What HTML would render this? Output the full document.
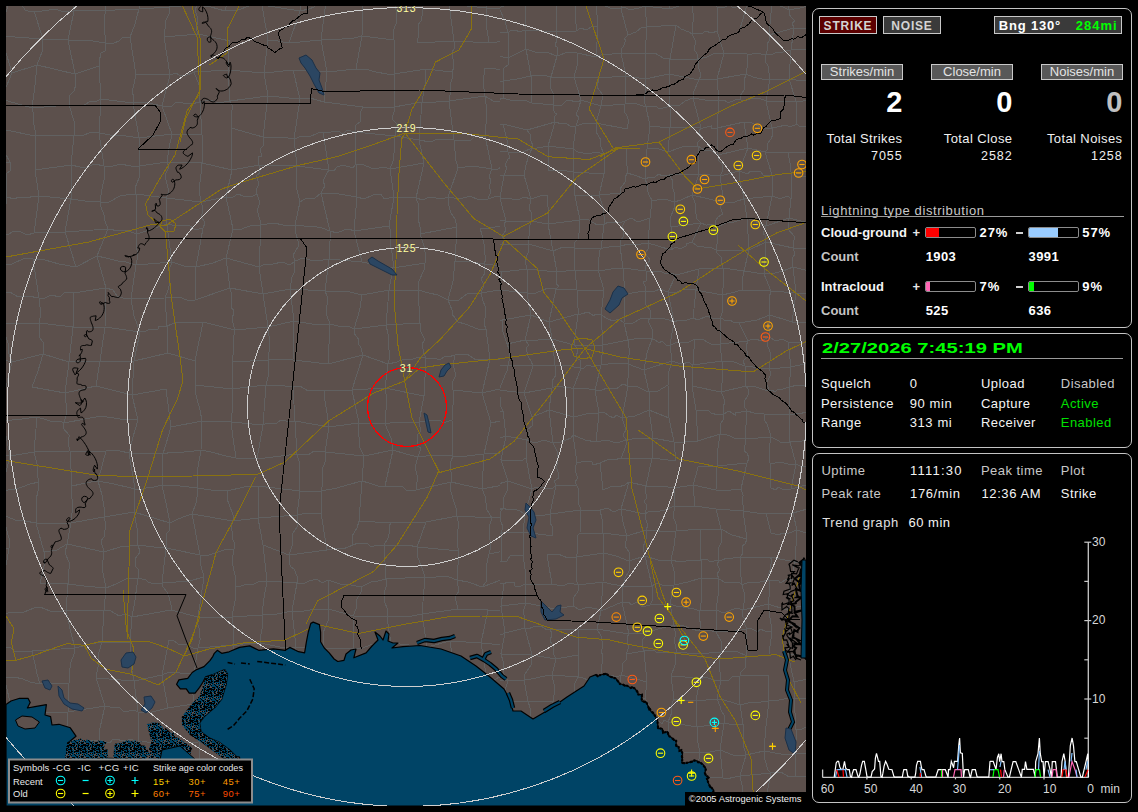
<!DOCTYPE html><html><head><meta charset="utf-8"><style>
html,body{margin:0;padding:0;background:#000;width:1138px;height:812px;overflow:hidden;}
body{position:relative;font-family:"Liberation Sans",sans-serif;}
.t{position:absolute;white-space:nowrap;line-height:1;}
.pn{position:absolute;border:1px solid #c4c4c4;border-radius:7px;box-sizing:border-box;}
.btn{position:absolute;box-sizing:border-box;border:1px solid #c8c8c8;}
.bar{position:absolute;box-sizing:border-box;border:1px solid #8c8c8c;border-radius:2px;overflow:hidden;}
.bar i{position:absolute;left:0;top:0;bottom:0;display:block;}

</style></head><body>
<svg width="1138" height="812" style="position:absolute;left:0;top:0">
<defs><clipPath id="mc"><rect x="6" y="6" width="800" height="800"/></clipPath></defs>
<g clip-path="url(#mc)">
<rect x="6" y="6" width="800" height="800" fill="#5c504c"/>
<clipPath id="cw"><rect x="6" y="6" width="494" height="800"/></clipPath><clipPath id="ce"><rect x="500" y="6" width="306" height="800"/></clipPath>
<path clip-path="url(#cw)" d="M-27 -25L1 -24M-27 -25L-24 -21L-23 -12L-25 -8L-20 1L-21 6M-21 6L-22 15L-22 30L-26 39M-26 39L1 36M-26 39L-25 48L-30 56L-27 62L-30 70M-30 70L-24 106M-24 106L1 99M-24 106L-31 132M-31 132L-21 131L-17 130L-4 131L1 129M-31 132L-31 170M-31 170L-20 168L-15 167L-9 166L0 162L10 162M-31 170L-24 193M-24 193L-15 195L-6 197L7 197M-24 193L-21 202L-25 212L-24 216L-20 229L-20 236M-20 236L2 233M-24 263L-15 265L-9 263L2 264M-24 263L-24 271L-28 276L-30 282L-30 288M-30 288L1 293M-30 288L-27 293L-30 299L-27 307L-27 313L-26 321M-26 321L3 323M-26 321L-26 330L-29 344L-30 355M-30 355L-18 357L-8 358L1 359L12 362M-30 355L-32 361L-31 367L-29 373L-31 384L-32 390M-32 390L4 395M-32 390L-32 407L-27 426M-27 426L3 421M-27 426L-26 456M-26 456L-15 454L0 455L10 456M-26 488L1 492M-26 488L-28 497L-26 504L-27 515M-27 515L-17 515L-5 515L3 515M-27 515L-20 556M-20 556L9 548M-20 556L-22 584M-22 584L4 577M-22 584L-28 611M-28 611L-17 611L-9 611L1 615M-28 611L-29 641M-29 641L3 647M-29 641L-23 677M-23 677L-15 676L-6 679L4 677M-23 677L-25 692L-22 709M-22 709L12 710M-22 709L-21 746M-21 746L-8 747L7 746M-21 746L-32 771M-32 771L2 770M-32 771L-21 806M-21 806L-14 806L-6 810L5 809L11 810M-21 806L-20 837M-20 837L3 834M1 -24L41 -21M1 -24L9 3M9 3L15 6L22 5L25 10L28 11L34 11M9 3L6 12L3 19L3 26L1 36M1 36L43 39M1 36L12 73M12 73L37 65M12 73L1 99M1 99L32 108M1 129L35 136M1 129L4 135L5 145L5 153L10 162M10 162L10 171L6 174L7 183L6 192L7 197M7 197L14 199L19 197L28 198L33 196L39 196M7 197L2 233M2 233L8 235L13 231L21 232L27 235L34 233M2 233L2 264M2 264L12 264L25 258L33 259M2 264L2 279L1 293M1 293L10 292L18 297L28 296L39 298M1 293L3 323M3 323L39 323M3 323L4 332L8 343L8 351L12 362M12 362L43 354M12 362L4 395M3 421L22 419L37 417M3 421L10 456M10 456L34 452M10 456L1 492M1 492L8 490L16 489L22 487L30 484L39 482M1 492L2 501L4 505L3 515M3 515L15 520L25 521L36 523M3 515L5 523L7 531L10 542L9 548M9 548L4 577M4 577L2 598L1 615M1 615L11 612L24 612L34 608M1 615L3 647M3 647L10 647L14 651L20 651L27 652L32 651M3 647L4 677M4 677L14 677L23 679L30 682L40 684M4 677L12 710M7 746L38 745M2 770L36 780M2 770L11 810M11 810L33 807M11 810L10 813L8 821L5 823L4 828L3 834M3 834L20 836L41 843M41 -21L73 -24M34 11L42 11L56 9L63 12L74 11M34 11L43 39M43 39L68 40M43 39L42 52L37 65M37 65L75 74M37 65L35 85L32 108M32 108L69 105M32 108L34 115L33 120L35 130L35 136M35 136L74 135M35 136L35 170M35 170L71 165M35 170L39 196M39 196L71 199M39 196L34 233M34 233L65 232M33 259L45 260L59 264L76 267M33 259L39 298M39 298L45 298L51 295L60 297L65 292L73 293M39 298L40 307L41 313L39 323M39 323L73 327M39 323L40 330L39 337L43 342L43 348L43 354M43 354L69 362M43 354L38 371L32 387M32 387L65 393M37 417L47 420L50 421L60 421L64 423M37 417L34 452M34 452L70 451M34 452L37 464L37 474L39 482M39 482L38 491L36 500L37 512L36 523M36 523L71 523M36 523L44 552M44 552L57 550L67 544M44 552L44 566L40 583M40 583L68 584M34 608L40 607L50 611L59 612L66 610M32 651L75 648M32 651L35 664L37 674L40 684M40 684L48 682L53 684L60 683L69 683M32 712L68 712M32 712L32 722L36 729L36 736L38 745M38 745L66 741M38 745L36 780M36 780L74 779M36 780L34 794L33 807M33 807L41 808L56 803L65 804L75 805M33 807L41 843M41 843L71 836M73 -24L98 -26M73 -24L72 -14L74 -8L73 1L74 11M74 11L106 10M74 11L68 40M68 40L87 40L105 43M68 40L75 74M75 74L99 66M75 74L76 84L74 91L69 96L69 105M69 105L76 105L84 105L91 101L97 101L101 99M69 105L74 121L74 135M74 135L82 136L91 132L99 133M74 135L71 165M71 165L80 167L87 167L95 164L104 166M71 165L71 199M71 199L85 201L100 202M71 199L65 232M65 232L108 229M65 232L76 267M76 267L97 256M73 293L106 288M73 293L73 327M73 327L105 327M73 327L69 362M69 362L100 361M69 362L65 393M65 393L96 386M65 393L65 401L66 403L66 410L66 415L64 423M64 423L101 416M64 423L63 428L69 435L69 437L68 443L70 451M70 451L106 451M70 451L72 486M72 486L81 484L91 482L98 481M72 486L71 493L73 504L72 513L71 523M71 523L104 517M71 523L67 544M67 544L104 552M67 544L65 553L70 564L68 575L68 584M68 584L84 586L106 588M68 584L66 610M66 610L104 610M66 610L70 629L75 648M75 648L90 644L102 642M75 648L74 654L71 662L70 668L69 674L69 683M69 683L68 712M68 712L105 706M68 712L66 741M66 741L99 740M66 741L74 779M74 779L84 775L95 775L104 774M74 779L72 790L75 805M75 805L103 809M75 805L73 822L71 836M71 836L79 837L84 837L92 842L101 842M98 -26L109 -29L123 -27L139 -31M98 -26L106 10M106 10L111 11L119 9L127 9L132 9L139 9M106 10L104 18L104 26L105 35L105 43M105 43L109 43L114 43L119 41L123 37L130 37M105 43L105 51L101 53L99 62L99 66M99 66L101 99M101 99L133 103M101 99L99 133M99 133L110 135L126 136L139 138M99 133L104 166M104 166L110 167L120 164L131 166L139 166M104 166L104 180L102 189L100 202M100 202L109 202L120 196L126 195L136 194M100 202L101 207L104 215L105 221L108 229M108 229L119 231L125 230L137 234M108 229L97 256M97 256L106 258L118 261L126 262L136 265M97 256L106 288M106 288L113 290L117 296L123 298L131 299M106 288L105 327M105 327L140 332M105 327L100 361M100 361L134 361M100 361L96 386M96 386L132 395M101 416L120 419L138 420M106 451L116 450L120 451L129 453M106 451L98 481M98 481L114 484L135 489M98 481L102 495L104 507L104 517M104 517L134 512M104 517L106 524L104 537L101 541L104 552M104 552L120 547L138 545M104 552L102 568L106 588M106 588L116 584L126 579L138 578M106 588L104 610M104 610L111 611L119 616L125 614L132 617M104 610L102 642M102 642L110 643L119 642L130 642M102 642L99 652L98 667L96 678M96 678L134 681M96 678L105 706M105 706L110 707L120 708L124 712L134 710L138 712M105 706L102 719L100 728L99 740M99 740L110 743L113 739L126 741L130 739L139 742M99 740L104 774M104 774L139 769M104 774L103 809M103 809L131 806M101 842L113 842L123 841L131 841M139 -31L168 -26M139 -31L141 -10L139 9M139 9L170 7M139 9L137 16L135 24L132 32L130 37M130 37L136 75M136 75L145 74L159 74L170 75M136 75L134 83L134 84L132 92L134 97L133 103M133 103L138 102L149 103L153 104L162 106M133 103L139 138M139 138L172 134M139 138L139 166M139 166L167 162M139 166L139 172L139 178L135 188L136 194M136 194L166 198M136 194L137 234M137 234L167 224M137 234L136 244L138 256L136 265M136 265L172 262M136 265L131 299M131 299L165 298M131 299L134 316L140 332M140 332L146 331L150 329L158 329L159 326L167 326M140 332L134 361M134 361L168 353M134 361L132 395M132 395L166 389M132 395L138 420M138 420L133 437L129 453M129 453L163 454M129 453L135 489M135 489L143 489L149 487L154 487L162 485M135 489L134 512M134 512L170 523M134 512L137 528L138 545M138 545L154 547L166 548M138 545L140 552L135 559L136 567L139 570L138 578M138 578L146 580L148 582L154 584L162 583M138 578L135 600L132 617M132 617L171 610M132 617L130 642M130 642L130 655L131 666L134 681M134 681L162 675M134 681L138 712M138 712L152 712L168 708M138 712L139 742M139 742L146 741L148 743L154 741L161 743L164 743M139 742L138 753L139 760L139 769M139 769L161 777M139 769L131 806M131 806L135 808L144 808L147 806L155 806L161 806M131 806L131 815L129 821L130 835L131 841M131 841L163 834M168 -26L174 -24L181 -28L188 -24L198 -27M168 -26L170 7M170 7L181 6L197 5M170 7L169 14L166 20L165 26L165 29L164 37M164 37L198 34M164 37L170 75M170 75L176 73L179 75L187 75L192 73L194 72M170 75L162 106M162 106L171 107L176 102L183 103L191 104L200 102M162 106L172 134M172 134L202 135M172 134L169 148L167 162M167 162L202 163M167 162L169 167L165 175L167 184L169 191L166 198M166 198L201 202M166 198L167 224M167 224L172 225L183 225L189 225L195 230L203 228M167 224L169 241L172 262M172 262L184 266L196 267M172 262L169 270L169 277L170 282L168 290L165 298M165 298L174 297L182 298L189 301L195 300M165 298L167 326M167 326L177 322L190 323L203 322M167 326L168 353M168 353L195 361M166 389L171 427M171 427L202 421M171 427L163 454M163 454L172 452L184 452L194 451L201 450M163 454L162 485M162 485L180 486L197 488M162 485L166 503L170 523M170 523L176 520L183 517L186 516L192 514M170 523L169 531L166 534L167 540L166 548M166 548L200 555M166 548L162 583M162 583L176 582L189 581L204 577M162 583L163 587L167 592L169 597L171 605L171 610M171 610L198 617M169 640L173 640L178 644L185 644L193 648L198 648M169 640L162 675M162 675L169 672L180 673L184 673L194 673M162 675L168 708M168 708L193 704M164 743L199 742M164 743L165 750L163 756L162 763L162 770L161 777M161 777L173 773L186 773L199 770M161 806L172 807L179 805L187 803L194 802M161 806L160 814L165 825L163 834M163 834L202 844M198 -27L217 -31L235 -31M198 -27L197 -8L197 5M197 5L211 7L225 11M197 5L195 10L197 16L198 23L196 27L198 34M198 34L230 41M194 72L228 70M194 72L199 85L200 102M200 102L211 100L218 103L230 101M200 102L202 135M202 135L202 163M202 163L232 170M202 163L201 174L199 190L201 202M201 202L226 197M201 202L202 205L202 214L201 216L205 223L203 228M203 228L196 267M196 267L213 263L226 258M196 267L195 300M195 300L230 288M203 322L235 330M203 322L195 361M195 361L195 385M195 385L232 389M195 385L196 395L200 410L202 421M202 421L231 422M202 421L201 450M201 450L211 452L226 456L236 458M201 450L198 467L197 488M197 488L211 490L227 491M197 488L197 497L196 503L192 514M192 514L233 521M192 514L200 555M200 555L209 555L224 550L234 549M200 555L201 566L204 577M204 577L198 617M198 617L232 617M198 617L197 622L199 628L200 638L200 640L198 648M198 648L233 645M198 648L194 673M194 673L233 673M194 673L196 678L193 686L192 691L194 699L193 704M193 704L204 707L211 709L218 708L228 710M193 704L199 742M199 742L224 740M199 742L199 770M199 770L209 773L223 771L232 775M199 770L197 779L195 792L194 802M194 802L227 811M194 802L196 813L196 823L202 835L202 844M202 844L232 836M235 -31L241 -30L249 -27L257 -26L264 -25M235 -31L230 -16L229 -3L225 11M225 11L238 10L252 5L262 5M230 41L229 50L228 53L229 60L228 70M228 70L264 73M228 70L230 101M230 101L268 96M230 101L233 107L231 114L231 122L231 128M231 128L263 137M231 128L232 170M232 170L259 165M232 170L226 197M226 197L233 197L238 194L243 196L251 197L257 194M226 197L233 229M233 229L239 230L247 227L253 225L261 225M233 229L226 258M226 258L259 267M226 258L230 288M230 288L263 294M230 288L232 296L231 307L234 311L232 320L235 330M235 330L268 327M235 330L233 340L234 349L232 362M232 362L268 360M232 362L232 378L232 389M232 389L266 385M232 389L233 404L231 422M231 422L263 425M231 422L233 438L236 458M236 458L257 459M227 491L244 487L258 486M227 491L227 499L229 504L233 515L233 521M233 521L258 518M233 521L231 527L232 531L233 540L234 542L234 549M234 549L232 562L235 575L235 587M235 587L241 586L247 584L254 584L260 581L267 581M235 587L236 596L234 606L232 617M232 617L262 615M232 617L233 625L234 633L233 639L233 645M233 645L237 646L243 644L248 643L255 643L260 643M233 645L233 673M233 673L240 672L248 674L257 678L264 679M233 673L228 710M228 710L259 713M228 710L224 740M224 740L260 736M224 740L226 759L232 775M232 775L227 811M227 811L232 836M232 836L241 839L247 839L255 842L261 843M264 -25L272 -25L279 -27L285 -28L290 -29L297 -31M264 -25L262 -20L262 -10L263 -2L262 5M262 5L300 11M262 5L268 40M268 40L273 40L283 42L289 43M268 40L264 73M264 73L293 70M264 73L268 96M268 96L300 99M268 96L263 137M263 137L281 137L294 139M263 137L264 145L260 149L262 156L258 157L259 165M259 165L297 166M259 165L260 173L256 176L259 183L256 191L257 194M257 194L260 203L257 210L260 220L261 225M261 225L274 223L283 225L295 225M261 225L259 267M259 267L265 264L273 264L282 262L290 265L295 261M259 267L263 294M263 294L290 289M263 294L268 327M268 327L294 321M268 327L270 344L268 360M268 360L278 359L287 359L293 360M268 360L269 373L266 385M266 385L277 385L293 387M266 385L263 425M263 425L267 423L277 423L281 420L286 421L295 421M263 425L257 459M257 459L297 454M258 486L300 491M258 486L258 518M258 518L297 515M258 518L263 545M263 545L289 555M263 545L267 581M267 581L297 583M267 581L264 598L262 615M262 615L277 614L292 611M262 615L263 624L261 634L260 643M260 643L280 647L296 647M260 643L263 659L264 679M264 679L261 688L262 697L260 706L259 713M259 713L262 718L259 727L260 731L260 736M260 736L259 769M259 769L269 769L275 771L284 773L290 776L299 779M259 769L258 809M258 809L269 805L280 803L288 801M258 809L258 815L257 824L261 836L261 843M297 -31L327 -31M297 -31L298 -21L297 -8L300 -1L300 11M300 11L309 9L314 7L318 2L326 1M300 11L289 43M289 43L321 40M293 70L327 72M293 70L300 99M300 99L310 98L324 102M300 99L294 139M294 139L302 136L305 136L309 137L318 133L323 132M294 139L297 166M297 166L329 170M297 166L296 186L300 202M300 202L305 199L315 198L321 193M300 202L295 225M295 225L304 226L312 226L322 228L330 231M295 225L296 234L298 241L298 247L293 255L295 261M295 261L303 258L314 261L323 260L329 259M295 261L294 273L292 277L290 289M290 289L325 291M290 289L294 321M294 321L312 324L330 324M294 321L293 360M293 360L328 364M293 387L300 386L308 391L315 390L324 391M293 387L295 421M295 421L329 427M295 421L297 454M297 454L308 455L314 451L325 452M297 454L300 465L299 479L300 491M300 491L321 491M300 491L297 515M297 515L308 513L321 513M297 515L297 527L293 533L292 546L289 555M289 555L327 550M289 555L289 563L291 567L294 569L297 576L297 583M297 583L305 583L309 581L317 579L322 583L328 580M297 583L292 611M292 611L304 611L316 609L329 609M292 611L296 647M296 647L323 648M296 647L295 680M295 680L298 677L303 679L311 680L315 675L321 676M295 680L297 706M297 706L291 748M291 748L298 744L307 743L315 741L323 738M291 748L299 779M299 779L324 777M299 779L294 784L294 795L288 801M288 801L308 803L324 801M288 801L291 837M291 837L329 839M327 -31L334 -26L344 -24L353 -24L363 -21M327 -31L326 1M326 1L321 40M321 40L329 39L342 39L354 38L362 36M321 40L327 72M327 72L356 69M327 72L324 102M324 102L363 107M323 132L331 132L338 131L343 134L347 130L355 132M323 132L329 170M329 170L334 171L337 167L343 165L353 168L356 164M329 170L326 175L323 181L325 186L322 191L321 193M321 193L332 193L345 195L357 197M321 193L330 231M330 231L337 233L344 230L349 229L354 231M330 231L330 241L329 252L329 259M329 259L362 262M329 259L325 291M325 291L346 291L362 295M325 291L327 296L327 305L326 309L327 316L330 324M330 324L338 326L344 327L348 326L354 329M330 324L328 364M328 364L363 355M324 391L352 390M324 391L325 401L327 413L329 427M329 427L359 423M329 427L325 452M325 452L364 456M325 452L325 462L322 470L323 483L321 491M321 491L337 488L347 485L362 481M321 491L321 513M321 513L327 550M327 550L337 548L343 549L353 545M328 580L340 584L351 585L361 587M328 580L329 609M329 609L353 616M329 609L328 621L323 633L323 648M323 648L354 649M323 648L323 662L321 676M321 676L360 675M321 676L329 712M329 712L333 712L344 713L350 714L355 713M329 712L324 722L324 730L323 738M323 738L330 737L337 741L344 741L349 746L358 745M323 738L324 777M324 777L357 772M324 777L325 783L323 789L327 792L327 797L324 801M324 801L364 808M329 839L340 838L349 839L358 838M363 -21L368 -21L379 -22L388 -23L393 -24M363 -21L362 -17L361 -6L361 -1L363 5M363 5L395 5M363 5L362 36M362 36L394 40M362 36L356 69M356 69L365 69L376 72L387 74L394 74M363 107L394 107M363 107L360 113L360 122L356 125L355 132M355 132L395 136M355 132L356 164M356 164L364 165L371 168L375 169L384 167L390 169M356 164L356 173L357 178L356 186L356 190L357 197M357 197L364 199L373 195L381 194L384 199L394 197M357 197L354 231M354 231L389 226M354 231L362 262M362 262L393 268M362 295L389 290M362 295L360 308L358 316L354 329M354 329L386 325M354 329L354 333L359 340L358 343L361 348L363 355M363 355L388 364M363 355L352 390M352 390L385 388M352 390L359 423M359 423L385 424M359 423L358 432L359 437L360 448L364 456M364 456L393 450M364 456L362 481M362 481L369 483L378 486L385 486M362 481L359 521M359 521L391 523M359 521L357 528L352 536L353 545M353 545L358 543L368 544L371 547L377 545L384 545M361 587L371 582L378 581L386 579M361 587L361 592L356 601L356 609L353 616M353 616L387 617M353 616L354 649M354 649L363 648L370 645L377 643L382 642L391 643M360 675L368 676L373 674L380 675L386 675M360 675L355 713M355 713L361 715L368 713L372 711L378 713L386 713M355 713L358 745M358 745L364 746L370 746L378 745L383 744L388 743M358 745L357 772M357 772L370 771L381 772L394 774M357 772L364 808M364 808L387 811M364 808L358 838M358 838L395 836M393 -24L409 -20L423 -21M393 -24L394 -18L392 -14L393 -8L396 -1L395 5M395 5L401 6L404 7L409 4L418 4L422 3M395 5L397 15L396 24L393 31L394 40M394 40L394 74M394 74L426 69M394 74L394 107M394 107L422 102M394 107L394 112L392 119L397 124L396 128L395 136M395 136L419 140M395 136L394 142L394 153L393 161L390 169M390 169L424 163M390 169L394 197M394 197L416 198M394 197L389 226M389 226L391 232L390 242L392 253L393 261L393 268M393 268L425 263M393 268L389 290M389 290L418 290M389 290L386 325M386 325L420 323M386 325L388 334L388 344L390 356L388 364M388 364L397 362L404 359L410 360L419 357L426 358M388 364L385 388M385 388L424 396M385 388L387 399L386 410L385 424M385 424L396 422L410 422L419 422M385 424L391 438L393 450M393 450L406 454L418 457M393 450L385 486M385 486L390 487L402 486L406 490L416 490M391 523L426 522M391 523L389 526L389 534L388 538L384 545M384 545L396 546L408 545L417 547M384 545L386 579M386 579L425 577M386 579L386 587L384 593L385 603L387 608L387 617M387 617L395 616L404 616L412 616L422 614M387 617L389 631L391 643M391 643L427 647M391 643L386 675M386 675L426 676M386 675L386 713M386 713L425 709M386 713L388 743M388 743L403 743L415 738L427 737M388 743L388 750L390 756L390 763L394 766L394 774M394 774L387 811M387 811L423 806M387 811L389 817L389 822L394 830L395 836M423 -21L432 -25L444 -27L452 -28M423 -21L422 3M422 3L426 4L436 2L444 3L449 4M422 3L423 12L421 21L418 25L419 33L417 43M417 43L454 41M426 69L452 72M426 69L425 85L422 102M422 102L430 103L442 101L449 101M422 102L419 140M419 140L430 142L438 139L444 139L454 140M419 140L424 163M424 163L416 198M416 198L423 200L429 197L436 198L442 199L448 197M416 198L419 206L418 218L420 227L420 234M420 234L457 227M420 234L424 246L425 252L425 263M425 263L424 270L419 281L418 290M418 290L429 293L438 295L448 300M418 290L419 306L420 323M420 323L420 330L425 340L422 344L424 354L426 358M426 358L434 358L440 360L445 356L448 357L455 355M426 358L424 396M424 396L419 422M419 422L425 421L430 420L440 420L443 423L452 420M419 422L421 431L418 434L417 446L421 448L418 457M418 457L435 455L453 456M418 457L415 467L417 475L417 482L416 490M416 490L451 482M426 522L457 516M426 522L417 547M417 547L459 551M417 547L418 558L421 565L425 577M425 577L430 578L442 576L449 577L457 580M425 577L422 614M422 614L458 609M422 614L427 647M427 647L450 641M427 647L428 652L428 656L428 664L425 669L426 676M426 676L456 680M426 676L425 709M425 709L450 709M425 709L426 720L425 728L427 737M427 737L458 743M427 737L428 750L428 758L426 771M426 771L432 769L436 769L441 771L449 771M423 806L431 805L441 803L450 801M423 806L418 842M418 842L422 840L432 837L441 838L446 836L453 833M452 -28L471 -26L491 -27M452 -28L449 4M449 4L486 8M449 4L454 41M454 41L473 42L489 42M454 41L454 49L452 52L453 59L454 67L452 72M452 72L452 79L450 86L450 88L450 95L449 101M449 101L485 96M449 101L454 140M454 140L463 140L471 140L475 136L485 136M454 140L455 151L455 157L458 168M458 168L473 166L492 169M458 168L448 197M448 197L460 199L470 196L479 200L488 199M448 197L449 206L451 213L455 219L457 227M457 227L455 261M455 261L472 262L484 264M455 261L453 281L448 300M448 300L459 300L468 293L481 293M448 300L452 310L452 314L458 322M458 322L465 324L478 329L486 329M455 355L467 354L476 360L490 359M455 355L453 365L456 375L452 383L453 390M453 390L482 393M453 390L453 405L452 420M452 420L453 456M453 456L467 456L484 454M453 456L451 461L450 465L451 472L452 479L451 482M451 482L482 489M451 482L450 488L453 499L456 508L457 516M457 516L492 518M457 516L458 521L458 529L457 536L457 544L459 551M459 551L457 580M457 580L468 582L482 587M457 580L459 591L455 597L458 609M458 609L488 610M450 641L481 643M450 641L456 680M456 680L487 680M456 680L450 709M450 709L484 715M450 709L453 717L456 728L457 733L458 743M458 743L449 771M449 771L458 771L469 779L481 780M449 771L450 776L452 785L451 794L450 801M450 801L465 808L482 811M450 801L453 833M453 833L487 839M491 -27L519 -29M491 -27L488 -18L490 -11L490 -7L489 1L486 8M486 8L497 8L507 9L515 9L523 12M486 8L486 20L487 30L489 42M489 42L497 42L503 40L508 42L517 42L522 39M485 68L493 68L503 71L513 74M485 68L483 82L485 96M485 96L493 101L499 101L507 104L515 107M485 96L487 112L486 124L485 136M485 136L492 169M492 169L497 170L505 164L514 162L522 162M492 169L489 176L491 181L489 187L491 191L488 199M488 199L497 196L504 196L513 193L519 193M480 228L490 228L500 226L512 226M480 228L482 235L484 244L484 250L486 259L484 264M484 264L493 265L502 267L507 265L518 269L524 267M484 264L485 273L481 279L484 285L481 293M481 293L499 290L520 292M481 293L483 301L485 306L486 313L484 324L486 329M486 329L490 359M490 359L503 360L517 359M490 359L482 393M482 393L522 384M482 393L491 423M491 423L500 421L507 420L514 422M491 423L484 454M484 454L514 453M484 454L482 489M482 489L519 482M482 489L485 496L487 510L492 518M492 518L518 515M492 518L489 527L489 534L491 546L489 554M489 554L519 548M489 554L488 558L486 569L486 574L486 582L482 587M482 587L501 580L520 576M488 610L520 610M488 610L481 643M481 643L524 647M481 643L487 680M487 680L493 681L499 677L506 678L513 679L518 677M487 680L484 715M484 715L519 712M484 715L483 726L485 731L484 742M484 742L496 745L509 745L521 745M481 780L491 779L496 778L505 779L513 778L518 780M481 780L482 811M482 811L491 811L504 811L512 812L522 810M482 811L487 839M519 -29L523 12M523 12L550 6M523 12L522 39M522 39L528 40L536 39L543 43L549 43M522 39L513 74M513 74L522 73L526 68L533 71L540 68L548 65M513 74L512 82L516 91L517 100L515 107M515 107L528 108L542 105L553 107M515 107L515 135M515 135L553 135M515 135L519 144L518 152L522 162M522 162L519 193M519 193L533 191L551 193M519 193L519 202L516 205L512 211L514 221L512 226M512 226L521 225L530 226L537 229L545 229M512 226L517 247L524 267M524 267L550 261M524 267L520 292M520 292L545 296M520 292L521 303L519 310L521 317L520 329M520 329L550 323M520 329L517 338L517 347L517 359M517 359L525 358L534 360L538 359L548 357M517 359L522 384M522 384L547 385M522 384L522 394L519 399L518 407L514 414L514 422M514 422L528 425L540 425L555 428M514 422L514 453M514 453L519 482M519 482L532 487L549 490M519 482L519 499L518 515M518 515L523 515L530 518L535 519L542 521L547 521M518 515L517 521L518 526L516 533L520 542L519 548M519 548L528 549L541 552L551 555M519 548L520 576M520 576L545 586M520 576L520 610M520 610L545 614M520 610L524 647M524 647L555 640M524 647L518 677M518 677L547 676M518 677L517 685L517 696L521 702L519 712M519 712L521 745M521 745L555 746M521 745L518 780M518 780L549 772M518 780L518 786L519 791L522 797L521 805L522 810M522 810L551 801M522 810L523 818L518 821L520 826L520 832L517 837M517 837L544 843M551 -21L551 -6L550 6M550 6L549 43M549 43L548 53L548 65M553 107L553 135M553 135L553 164M553 164L552 168L553 174L553 180L551 188L551 193M551 193L545 229M545 229L546 237L549 247L549 253L550 261M550 261L545 296M545 296L550 323M550 323L548 341L548 357M548 357L547 385M547 385L555 428M555 428L556 434L555 444L554 451L552 458M552 458L551 473L549 490M549 490L546 501L549 508L547 521M551 555L549 562L548 572L547 579L545 586M545 586L543 594L546 601L544 610L545 614M555 640L547 676M547 676L546 687L548 695L548 705M548 705L550 713L553 727L554 734L555 746M555 746L552 753L551 755L551 761L551 766L549 772M549 772L551 801" fill="none" stroke="#616161" stroke-width="1" shape-rendering="crispEdges"/>
<path clip-path="url(#ce)" d="M456 -16L475 -20M456 -16L455 -13L458 -9L459 -4L458 2M458 2L460 5L465 4L469 6L474 8L478 7M451 29L461 29L476 30M451 29L452 34L453 45L454 50L454 57M454 57L459 58L467 53L469 51L477 52M454 57L458 79M458 79L457 104M457 104L466 103L472 104L480 107M457 104L457 109L456 118L452 125M452 125L459 125L463 130L469 128L477 130M453 154L466 153L479 147M453 154L451 158L452 165L451 167L454 171L452 177M452 177L464 176L472 177L482 178M452 177L452 200M452 200L475 196M452 200L454 221M454 221L462 221L474 219L483 220M454 221L455 224L459 231L460 235L459 241M459 241L477 241M459 241L452 274M452 274L452 277L454 283L454 288L456 290M456 290L485 299M456 290L458 299L460 303L461 309L460 318L461 322M461 322L480 313M452 341L478 345M452 341L452 364M452 364L483 367M452 364L457 387M457 387L477 390M457 387L458 410M458 410L480 415M453 441L467 442L478 442M453 441L455 461M455 461L462 460L467 458L475 461L484 459M455 461L454 464L457 469L456 478L458 481L457 486M457 486L478 490M457 486L458 490L457 498L455 505M455 505L478 514M455 505L458 539M458 539L466 536L472 535L480 536M458 539L458 547L459 551L461 560M461 560L470 557L482 555M461 560L457 565L458 570L458 576L455 581M455 581L465 581L478 580M455 581L456 596L458 608M458 608L482 608M458 608L452 627M452 627L476 634M452 627L454 632L452 642L454 649L455 654M455 654L479 651M459 678L465 679L475 681L479 683M459 678L454 692L451 705M451 705L455 707L465 706L469 703L474 705L481 703M451 705L452 711L451 713L453 718L453 721L455 726M455 726L484 731M455 726L453 749M453 749L483 749M453 749L452 759L455 769L455 777M455 777L464 775L466 776L473 776L481 778M455 777L454 786L452 798M452 798L458 798L464 798L471 796L476 798L483 799M452 798L450 803L453 813L454 820L453 824M453 824L457 822L462 823L469 821L472 820L478 821M475 -20L483 -17L486 -17L493 -18L499 -19L506 -17M475 -20L476 -15L479 -7L478 0L478 7M478 7L489 6L499 8M478 7L476 30M476 30L508 33M476 30L477 52M477 52L508 58M477 52L478 66L480 83M480 83L504 81M480 83L480 107M480 107L503 98M480 107L479 110L480 115L477 123L475 125L477 130M477 130L503 124M477 130L478 136L476 135L476 138L478 144L479 147M479 147L487 149L499 151L508 152M479 147L482 178M482 178L504 175M482 178L475 196M475 196L479 199L490 195L493 200L500 198M483 220L506 221M483 220L477 241M477 241L482 243L488 243L491 244L498 242L501 245M477 241L475 271M475 271L502 272M485 299L488 299L491 297L493 294L497 291L500 290M485 299L481 302L482 309L480 313M480 313L487 313L493 319L497 320L502 320M480 313L478 345M478 345L483 367M483 367L508 365M483 367L477 390M477 390L499 390M477 390L480 415M480 415L503 411M480 415L477 428L478 442M478 442L482 439L489 442L494 437L500 438L506 436M478 442L484 459M484 459L494 458L501 460M478 490L495 485L508 481M478 490L478 514M478 514L486 513L488 513L498 510L503 508M478 514L480 519L480 523L478 533L480 536M480 536L490 535L494 536L501 533M480 536L482 543L481 548L482 555M482 555L501 562M482 555L480 561L481 573L478 580M478 580L504 584M478 580L482 608M482 608L501 606M482 608L482 612L478 621L478 626L476 634M476 634L488 635L498 636L505 633M476 634L479 651M479 651L501 654M479 651L479 683M479 683L495 680L508 681M479 683L480 687L479 699L481 703M481 703L485 702L486 704L493 700L498 701L501 702M481 703L484 731M484 731L493 726L507 725M484 731L483 749M483 749L485 750L493 748L496 749L501 750L506 752M483 749L482 755L480 762L479 764L479 775L481 778M481 778L509 775M481 778L483 799M483 799L478 821M506 -17L513 -16L519 -20L523 -18L528 -19M506 -17L499 8M499 8L508 4L512 4L518 2L526 2M499 8L505 21L508 33M508 33L510 31L516 30L519 32L525 30M508 33L508 58M508 58L526 49M508 58L509 64L504 68L503 76L504 81M504 81L517 79L531 76M504 81L503 98M503 98L513 101L524 100L532 103M503 124L527 130M503 124L507 140L508 152M508 152L523 152L532 148M508 152L510 158L508 159L505 165L507 168L504 175M504 175L524 175M504 175L500 198M500 198L506 198L518 200L524 197L531 199M500 198L506 221M506 221L531 221M506 221L504 224L506 230L502 236L505 240L501 245M501 245L529 244M502 272L527 269M502 272L500 290M500 290L527 293M502 320L531 315M502 320L503 332L507 344M507 344L525 340M507 344L509 349L509 355L510 358L508 365M508 365L533 366M508 365L507 371L505 375L502 383L499 390M499 390L524 393M499 390L499 396L501 399L500 405L503 411M503 411L506 436M506 436L527 440M506 436L501 460M501 460L504 460L510 460L514 460L521 461L526 458M501 460L508 481M508 481L532 489M508 481L507 491L503 499L503 508M503 508L508 510L513 509L517 510L518 510L525 514M503 508L501 511L500 517L501 522L503 527L501 533M501 533L523 532M501 533L501 562M501 562L507 561L510 556L518 555L523 555M504 584L507 582L514 582L515 586L521 586L525 584M504 584L501 606M501 606L526 603M501 606L503 619L505 633M505 633L525 628M505 633L501 654M501 654L532 655M501 654L503 661L503 672L508 681M508 681L524 680M508 681L501 702M501 702L528 701M501 702L504 708L505 713L506 718L507 725M507 725L512 724L520 726L528 728M507 725L506 752M506 752L531 750M506 752L509 775M509 775L529 774M509 775L506 797M506 797L529 797M506 797L506 820M506 820L527 822M528 -19L554 -20M528 -19L526 -11L525 -2L526 2M526 2L556 6M526 2L525 30M525 30L556 32M525 30L526 49M526 49L535 52L546 52L557 56M526 49L531 76M531 76L543 75L551 77M531 76L532 103M532 103L553 105M527 130L555 122M527 130L530 134L531 141L533 146L532 148M532 148L537 148L541 147L543 147L548 146M532 148L528 158L526 165L524 175M524 175L531 199M531 199L540 196L547 195M531 199L529 209L531 212L531 221M531 221L548 224M531 221L530 225L529 232L529 236L528 240L529 244M529 244L553 251M529 244L528 253L525 260L527 269M527 269L557 272M527 269L527 293M527 293L536 293L548 288L556 289M527 293L531 315M531 315L549 322M531 315L525 340M525 340L538 340L552 339M525 340L529 345L526 348L528 356L531 361L533 366M533 366L555 365M533 366L524 393M524 393L552 388M524 393L532 417M532 417L549 410M532 417L533 425L527 430L530 433L527 440M527 440L535 443L544 440L553 443M527 440L526 458M526 458L532 489M532 489L536 487L544 488L545 489L553 488L556 485M532 489L525 514M525 514L540 516L550 514M525 514L523 532M523 532L553 536M523 532L523 555M523 555L525 569L525 584M525 584L552 584M525 584L526 603M526 603L555 609M526 603L525 606L523 612L525 618L524 623L525 628M525 628L528 629L533 627L541 626L547 630L550 629M525 628L532 655M532 655L556 659M532 655L531 665L525 674L524 680M524 680L531 679L545 676L552 675M524 680L528 701M528 701L553 702M528 701L530 708L530 716L530 721L528 728M528 728L551 723M528 728L530 738L531 750M531 750L551 751M531 750L529 774M529 774L537 775L548 774M529 774L528 783L530 790L529 797M529 797L557 800M529 797L528 806L527 815L527 822M527 822L534 820L539 823L544 822L550 821M554 -20L556 -20L564 -20L567 -19L569 -17L572 -16M554 -20L556 6M556 6L577 3M556 6L556 32M556 32L576 31M556 32L557 39L555 46L557 47L557 56M557 56L568 52L577 53M557 56L551 77M551 77L574 77M551 77L550 84L551 89L553 93L553 100L553 105M553 105L561 106L564 103L567 100L578 102L581 100M553 105L553 109L555 113L557 114L554 117L555 122M555 122L562 124L566 123L570 126L572 127L576 126M555 122L548 146M548 146L573 149M548 146L548 170M548 170L561 170L573 172M547 195L548 207L548 224M548 224L580 220M548 224L553 251M553 251L563 247L574 248M553 251L557 272M557 272L575 270M557 272L556 273L556 280L556 284L559 286L556 289M556 289L577 290M556 289L549 322M549 322L578 314M549 322L552 339M552 339L574 345M552 339L555 365M555 365L559 365L564 365L571 365L574 367L581 368M555 365L556 375L552 381L552 388M552 388L556 386L558 386L563 387L569 387L573 389M552 388L549 410M549 410L574 417M549 410L553 443M553 443L561 442L566 440L571 438L573 435M553 443L557 451L558 459L557 465M557 465L556 466L558 472L559 478L554 481L556 485M556 485L577 486M556 485L550 514M550 514L581 510M550 514L550 523L552 526L553 536M547 555L558 554L568 558L576 557M547 555L552 584M552 584L562 586L570 583L578 585M555 609L561 607L566 608L567 607L573 606M550 629L578 630M550 629L552 634L550 641L554 647L553 653L556 659M556 659L578 655M556 659L552 675M552 675L578 677M552 675L555 689L553 702M553 702L551 723M551 723L580 729M551 723L551 751M551 751L575 755M551 751L548 774M548 774L565 772L580 771M548 774L552 779L551 787L553 792L554 798L557 800M557 800L579 797M557 800L554 804L555 812L553 816L550 821M550 821L574 820M572 -16L581 -15L591 -22L599 -22M572 -16L574 -11L573 -8L574 -2L577 3M577 3L596 2M577 3L575 7L575 13L575 22L576 24L576 31M576 31L581 28L586 30L593 26L598 27M577 53L596 57M577 53L577 60L577 66L574 77M574 77L599 78M574 77L581 100M581 100L601 106M581 100L579 107L576 115L579 117L576 126M576 126L585 123L596 123M576 126L573 149M573 149L578 152L588 154L596 152L604 154M573 149L573 172M573 172L604 174M573 172L575 196M575 196L599 195M575 196L580 220M580 220L585 219L589 220L597 225L598 224L604 225M580 220L579 224L579 233L578 239L574 243L574 248M574 248L582 249L594 248L601 249M574 248L575 270M575 270L598 270M575 270L577 290M577 290L604 290M577 290L577 299L578 308L578 314M578 314L581 314L588 312L594 316L595 314L601 315M578 314L574 345M574 345L583 345L593 346L603 345M574 345L578 349L576 358L580 360L581 368M581 368L583 369L587 365L595 367L596 365L601 365M581 368L573 389M573 389L583 388L595 390M573 389L574 417M574 417L586 414L599 413M574 417L573 435M573 435L585 440L596 442M573 435L577 463M577 463L581 462L589 461L592 462L593 465L600 463M577 463L575 467L575 471L578 478L575 482L577 486M577 486L579 490L578 497L578 502L581 510M581 510L600 510M581 510L580 533M580 533L603 533M580 533L577 536L577 541L578 549L577 554L576 557M576 557L604 553M576 557L577 566L576 569L576 578L578 585M578 585L603 582M578 585L578 591L577 593L573 598L573 606M573 606L580 610L587 607L597 609L601 611M578 630L597 629M578 630L578 655M578 655L579 660L578 664L579 669L578 677M578 677L583 678L588 680L596 682L600 681M578 677L574 685L574 697M574 697L580 697L590 703L594 706L602 706M574 697L578 713L580 729M580 729L582 727L588 727L594 727L595 724L602 725M580 729L575 755M575 755L598 746M575 755L575 761L576 764L580 771M580 771L596 769M580 771L579 797M579 797L574 820M574 820L583 819L591 820L601 818M599 -22L629 -18M599 -22L596 2M596 2L610 8L621 9M596 2L598 27M598 27L596 57M596 57L603 54L607 55L617 53L621 53M599 78L626 76M599 78L597 87L602 94L602 100L601 106M601 106L625 104M601 106L596 123M596 123L627 129M596 123L596 132L601 140L600 145L604 154M604 154L604 174M604 174L599 195M599 195L621 193M599 195L603 207L604 216L604 225M604 225L608 222L615 222L617 223L622 222L625 221M604 225L601 249M601 249L605 247L609 247L613 246L620 246M601 249L599 251L599 257L598 264L598 264L598 270M598 270L605 270L611 269L619 268L623 268M598 270L604 290M604 290L601 315M601 315L608 319L613 321L619 319L624 323M601 315L603 345M603 345L628 340M603 345L601 365M601 365L608 364L621 363L628 364M601 365L595 390M595 390L602 390L607 388L616 389L623 384L628 386M595 390L599 413M599 413L604 412L609 416L614 418L616 415L622 418M599 413L596 442M596 442L606 440L617 443L626 440M600 463L609 459L614 460L621 458M600 463L603 490M603 490L610 487L611 486L618 487L625 485L629 482M600 510L608 508L613 512L621 509M600 510L602 519L602 527L603 533M603 533L627 536M603 533L604 553M604 553L616 556L629 561M604 553L603 582M603 582L611 584L623 586M603 582L601 611M601 611L622 602M601 611L597 629M597 629L629 634M597 629L601 636L602 641L603 647L601 651L603 656M603 656L600 681M600 681L606 681L607 679L611 675L617 677L621 675M600 681L602 706M602 706L608 702L614 698L620 698M602 706L600 712L599 713L603 715L604 722L602 725M602 725L624 730M598 746L628 750M598 746L596 769M596 769L603 771L610 769L612 772L620 771L626 774M596 769L598 778L601 781L603 790L605 794M605 794L627 800M605 794L602 800L605 807L600 814L601 818M601 818L629 825M629 -18L639 -17L650 -17M629 -18L625 -13L624 -5L626 -4L621 3L621 9M621 9L623 7L631 10L637 8L639 8L645 6M621 9L628 35M628 35L636 32L642 27L647 27M628 35L624 39L626 40L623 47L622 48L621 53M621 53L632 54L645 53M621 53L626 76M626 76L645 79M626 76L625 104M625 104L633 103L637 104L646 107M625 104L624 111L627 116L628 119L628 124L627 129M627 148L626 154L627 166L627 173M627 173L634 175L645 179M627 173L625 178L626 181L623 185L620 189L621 193M625 221L631 218L638 222L644 220L650 218M625 221L622 227L624 230L623 237L621 240L620 246M620 246L629 244L636 245L641 244L648 243M620 246L623 268M623 268L646 271M623 268L625 294M625 294L645 291M625 294L624 323M624 323L631 324L642 318L650 318M624 323L628 340M628 340L634 339L646 338L652 339M628 340L629 348L629 355L628 364M628 364L644 370M628 364L628 372L629 374L627 382L628 386M628 386L633 387L636 386L640 388L646 391L649 392M628 386L622 418M622 418L635 416L649 410M622 418L624 424L626 430L623 435L626 440M626 440L639 438L653 438M626 440L626 445L624 451L621 458M621 458L652 458M629 482L646 486M629 482L621 509M621 509L645 514M621 509L623 522L627 536M627 536L646 530M627 536L625 546L629 552L629 561M629 561L645 556M629 561L629 571L625 578L623 586M623 586L652 586M623 586L622 602M622 602L629 602L631 605L637 602L642 607L650 605M622 602L629 634M629 634L643 633M629 634L627 637L628 645L629 647L626 654M626 654L644 651M626 654L627 659L622 664L622 667L623 669L621 675M621 675L647 682M621 675L620 698M620 698L645 698M620 698L624 730M624 730L652 721M624 730L628 750M628 750L650 746M628 750L626 774M626 774L646 771M626 774L624 779L627 785L628 791L624 794L627 800M627 800L629 801L633 800L637 799L641 801L647 802M627 800L629 825M629 825L651 822M650 -17L655 -18L664 -19L668 -21M650 -17L645 6M645 6L670 9M645 6L646 17L647 27M647 27L676 25M647 27L645 53M645 53L655 53L663 58L670 59M645 53L645 79M645 79L669 74M645 79L645 88L646 91L644 101L646 107M646 107L655 106L660 109L670 106M646 107L650 126M650 126L670 128M650 126L647 149M647 149L655 148L659 149L668 152M647 149L645 179M645 179L650 177L655 177L659 174L662 176L669 175M645 179L647 184L647 188L649 195L652 200M652 200L657 200L660 199L665 199L671 201L674 202M652 200L650 218M650 218L648 243M648 243L671 250M648 243L649 248L645 253L650 260L645 267L646 271M646 271L651 271L660 271L666 274L672 273L676 275M646 271L647 275L646 281L643 281L646 289L645 291M645 291L655 291L660 289L668 292M645 291L645 300L646 305L651 311L650 318M650 318L657 318L660 318L665 319L669 320L674 322M650 318L648 321L651 327L652 329L653 333L652 339M652 339L654 339L659 343L662 341L667 346L670 345M652 339L647 353L644 370M644 370L672 361M644 370L649 392M649 392L658 391L668 385M649 392L649 410M649 410L669 418M649 410L653 438M653 438L674 442M653 438L652 458M652 458L676 461M652 458L646 486M646 486L661 486L674 488M646 486L645 490L647 498L644 501L647 506L645 514M645 514L650 511L660 511L665 510L674 506M645 514L645 518L648 525L646 530M646 530L654 530L665 532L676 531M646 530L647 537L645 541L643 548L645 556M645 556L658 560L671 560M645 556L652 586M652 586L657 583L665 586L668 585L674 585M652 586L653 591L652 596L653 600L652 601L650 605M650 605L670 604M643 633L674 625M643 633L646 636L643 639L642 646L642 646L644 651M644 651L653 650L658 653L668 652L676 652M644 651L647 682M647 682L645 698M645 698L650 707L649 715L652 721M652 721L654 723L658 720L662 724L664 720L668 722M650 746L656 749L658 751L662 748L664 752L668 751M650 746L646 771M646 771L677 769M646 771L647 802M647 802L672 797M647 802L651 822M651 822L670 820M668 -21L681 -19L692 -19M668 -21L670 9M670 9L679 6L688 5L694 2M676 25L681 29L689 32L692 34M676 25L670 59M670 59L698 59M670 59L669 74M669 74L699 80M669 74L669 92L670 106M670 106L680 105L685 101L693 98M670 106L670 128M670 128L685 127L701 128M670 128L668 152M668 152L682 147L698 146M669 175L699 174M669 175L673 181L672 187L675 194L674 202M674 202L681 200L692 195M674 202L675 206L671 216L670 221L671 227M671 227L701 223M671 227L671 250M671 250L676 247L680 249L686 246L686 244L692 242M676 275L699 269M676 275L668 292M668 292L674 293L682 290L689 289L696 290M668 292L674 322M674 322L679 320L685 321L687 320L693 318M674 322L670 345M670 345L678 342L687 343L695 339M670 345L672 361M672 361L678 363L683 364L688 362L693 365M672 361L669 371L668 379L668 385M668 385L669 418M669 418L674 442M674 442L682 443L688 441L693 442L698 441M674 442L676 461M674 488L693 485M674 488L674 506M674 506L695 506M674 506L674 511L673 514L674 519L677 526L676 531M676 531L700 529M676 531L674 546L671 560M671 560L680 562L692 560L701 560M671 560L674 571L674 585M674 585L688 582L701 578M674 585L670 604M670 604L676 606L683 607L694 609L700 611M670 604L674 625M674 625L684 626L692 629L699 631M674 625L675 631L676 635L674 639L676 649L676 652M676 652L697 654M676 652L675 665L671 676M671 676L685 677L700 679M671 676L674 699M674 699L696 701M674 699L671 706L672 712L668 722M668 722L697 727M668 722L668 751M668 751L677 754L688 752L700 753M668 751L677 769M677 769L683 771L687 775L694 776M677 769L674 783L672 797M672 797L693 798M672 797L672 799L671 808L672 809L670 816L670 820M670 820L696 824M692 -19L696 -17L703 -21L705 -22L713 -22L716 -22M692 -19L694 2M694 2L692 8L694 18L692 26L692 34M692 34L697 33L703 33L705 31L712 33L717 31M692 34L696 42L694 49L697 54L698 59M698 59L707 57L715 53L724 53M698 59L698 62L699 69L700 72L701 75L699 80M699 80L717 79M699 80L694 91L693 98M693 98L699 99L705 100L710 100L719 101M693 98L701 128M701 128L703 128L711 126L711 129L717 128M701 128L699 131L701 137L702 138L697 143L698 146M698 146L704 150L708 150L711 150L717 155L718 155M698 146L699 174M699 174L710 175L720 176M699 174L692 195M692 195L709 199L724 203M692 195L695 203L695 208L697 219L701 223M701 223L706 225L707 225L713 224L715 226M701 223L692 242M692 242L697 246L704 247L710 247L716 250M699 269L723 268M699 269L696 290M696 290L722 295M696 290L693 318M693 318L698 320L707 316L712 318L720 319M695 339L702 339L709 343L713 345L720 344M695 339L694 349L693 354L693 365M693 365L722 361M693 365L692 386M692 386L721 392M692 386L696 410M696 410L703 410L709 411L711 413L718 415L724 414M696 410L698 441M698 441L720 434M698 467L717 466M698 467L696 475L693 485M693 485L716 490M693 485L695 506M695 506L716 509M700 529L721 529M700 529L701 560M701 560L707 559L710 562L714 561L717 560L719 561M701 560L701 578M701 578L719 579M701 578L702 595L700 611M700 611L709 610L716 610M700 611L699 618L701 625L699 631M699 631L707 630L712 631L716 632M697 654L721 652M700 679L705 677L714 680L721 680M700 679L696 701M696 701L717 699M696 701L697 727M697 727L724 723M697 727L697 738L700 753M700 753L710 752L720 750M700 753L698 765L694 776M694 776L723 778M694 776L693 798M693 798L723 799M693 798L693 804L696 807L695 816L694 821L696 824M696 824L720 818M716 -22L745 -19M716 -22L717 7M717 7L722 8L730 5L733 8L742 5L747 5M717 7L717 18L717 31M717 31L724 53M724 53L747 54M724 53L717 79M717 79L746 74M717 79L719 101M719 101L724 100L727 102L730 102L738 99L741 100M719 101L717 128M717 128L744 122M717 128L718 155M718 155L748 148M718 155L718 160L722 164L722 172L720 176M720 176L739 171M720 176L724 203M724 203L731 202L733 203L737 201L744 199M724 203L720 207L723 214L718 217L715 222L715 226M715 226L720 226L726 223L734 222L743 219L747 218M715 226L718 238L716 250M716 250L723 251L732 250L739 251L749 250M716 250L717 253L721 257L721 261L723 268M723 268L744 271M723 268L724 282L722 295M722 295L731 293L742 290M722 295L722 301L723 305L722 313L720 319M720 319L722 318L725 321L730 320L733 322L739 323M720 319L720 344M720 344L748 341M720 344L722 361M722 361L729 361L734 362L742 365L745 366M722 361L723 374L721 392M721 392L746 386M721 392L723 396L725 402L723 407L724 414M724 414L729 411L735 415L735 413L741 412L747 411M724 414L723 420L720 425L721 431L720 434M720 434L727 435L730 436L736 439L742 438L745 439M720 434L718 448L717 466M717 466L747 463M717 466L716 490M716 490L723 490L731 490L741 489M716 509L743 511M716 509L721 529M721 529L732 535L747 539M721 529L722 541L718 549L719 561M719 561L722 560L727 558L733 558L736 557L740 558M719 561L717 564L720 570L717 574L719 579M719 579L726 583L729 582L739 582L742 585M719 579L718 596L716 610M716 610L724 613L731 610L737 608L743 610M716 610L716 632M716 632L725 631L735 631L747 629M716 632L721 641L721 652M721 652L732 651L738 652L747 656M721 652L719 664L721 680M721 680L724 681L729 680L733 676L740 676M721 680L717 699M717 699L724 700L734 703L740 705M717 699L720 706L720 708L722 712L725 716L724 723M724 723L734 725L743 724M724 723L720 750M720 750L733 755L746 755M720 750L723 778M723 778L726 779L735 777L740 776M723 799L722 804L719 812L720 818M720 818L725 818L735 821L738 822L746 825M745 -19L769 -22M745 -19L746 -5L747 5M747 5L772 2M747 5L740 29M747 54L752 54L758 53L761 54L766 54M747 54L748 62L746 74M746 74L753 77L757 78L762 79L770 79M746 74L744 81L744 83L744 90L740 96L741 100M741 100L747 100L753 98L759 98L766 101M744 122L752 123L763 128L772 128M744 122L748 148M748 148L765 152M748 148L739 171M739 171L748 174L750 171L760 171L764 176L772 175M739 171L739 179L742 188L744 199M744 199L772 196M744 199L747 218M747 218L766 226M747 218L749 250M749 250L766 242M749 250L744 271M744 271L764 274M744 271L743 276L742 282L742 290M742 290L771 291M739 323L757 320L770 315M739 323L748 341M748 341L750 340L755 339L762 341L767 338L769 337M748 341L746 346L748 356L743 361L745 366M745 366L769 369M745 366L746 386M746 386L756 387L768 391M746 386L748 389L748 395L744 402L744 406L747 411M747 411L754 413L764 414M747 411L745 439M745 439L771 437M745 439L745 445L744 451L747 453L749 458L747 463M747 463L741 489M741 489L743 495L743 496L742 503L744 507L743 511M743 511L750 512L757 513L766 513M743 511L747 539M747 539L745 544L742 546L743 553L740 558M740 558L770 557M740 558L740 569L742 585M742 585L749 582L760 582L769 580M742 585L745 596L743 610M743 610L768 604M743 610L742 616L744 618L744 622L745 625L747 629M747 629L750 628L758 632L760 629L765 631L772 631M747 629L746 644L747 656M747 656L745 659L746 665L745 668L740 673L740 676M740 676L768 675M740 676L739 689L740 705M740 705L752 702L761 702L769 701M740 705L743 724M743 724L744 735L743 744L746 755M746 755L764 751M746 755L740 776M740 776L771 773M740 776L743 790L741 801M741 801L747 803L759 800L765 803M741 801L745 807L744 819L746 825M746 825L752 825L762 820L769 820M769 -22L779 -19L788 -17M769 -22L770 -13L770 -6L772 2M772 2L789 10M772 2L769 35M769 35L794 28M769 35L770 40L767 44L768 48L766 54M766 54L773 54L775 53L783 52L786 51L791 50M766 54L765 61L768 66L769 73L770 79M770 79L789 79M770 79L766 101M766 101L796 101M766 101L772 128M772 128L777 127L786 125L790 127L797 124M772 128L773 134L771 139L767 144L768 149L765 152M765 152L788 153M765 152L772 175M772 175L772 196M772 196L775 197L781 199L782 198L788 196L791 199M772 196L766 226M766 226L789 218M766 226L763 234L765 235L766 242M766 242L793 248M766 242L764 274M764 274L775 273L783 271L793 267M764 274L771 291M771 291L796 293M771 291L769 298L769 306L770 315M770 315L792 322M770 315L769 337M769 337L776 341L782 339L788 342M769 337L767 344L770 352L770 361L769 369M769 369L791 367M769 369L771 373L770 376L766 384L768 387L768 391M768 391L772 390L775 392L778 389L783 389L789 387M764 414L789 415M764 414L765 421L767 424L770 433L771 437M771 437L777 440L782 443L790 442M771 437L769 449L770 463M770 463L775 463L781 462L791 465L796 464M770 463L771 488M771 488L776 490L778 487L782 489L785 489L791 489M766 513L793 513M766 513L771 533M771 533L779 535L782 533L789 533L797 530M770 557L795 562M770 557L772 560L770 568L770 570L768 577L769 580M769 580L771 580L779 581L780 583L787 579L791 580M769 580L770 590L768 604M768 604L787 610M768 604L772 631M772 631L769 654M768 675L769 701M769 701L779 700L784 699L794 698M769 701L766 726M766 726L764 751M764 751L781 754L795 754M764 751L764 756L766 763L768 770L771 773M771 773L777 772L781 772L789 777L795 776M771 773L765 803M765 803L795 793M765 803L766 807L766 814L769 820M788 -17L815 -17M788 -17L789 10M789 10L800 8L816 4M789 10L790 15L789 15L795 21L792 23L794 28M794 28L800 29L806 28L812 26L816 28M794 28L791 50M791 50L818 49M791 50L789 79M789 79L803 81L814 80M789 79L796 101M796 101L803 101L816 97M796 101L797 124M797 124L799 126L806 127L811 129L816 130M788 153L816 152M788 153L790 163L791 172M791 172L794 173L798 177L806 176L812 176L815 179M791 172L791 199M791 199L789 218M789 218L817 225M789 218L788 226L788 229L794 236L794 240L793 248M793 248L806 249L815 250M793 248L795 254L792 259L793 267M793 267L821 274M793 267L796 293M796 293L820 293M796 293L792 322M792 322L814 322M788 342L819 343M788 342L791 367M791 367L817 361M791 367L789 387M789 387L798 385L807 385L817 386M789 387L789 415M789 415L816 411M789 415L790 442M790 442L802 441L817 435M790 442L796 464M796 464L800 466L803 467L811 466L814 465M796 464L793 479L791 489M791 489L817 482M793 513L821 505M793 513L797 530M797 530L815 536M797 530L795 562M795 562L801 563L811 562L817 560M795 562L791 580M791 580L820 578M791 580L787 610M787 610L797 607L805 606L816 604M787 610L790 613L786 618L790 623L789 625M789 625L817 630M789 625L790 637L788 654M788 654L817 657M788 654L794 682M794 682L816 677M794 682L794 698M794 698L817 699M794 698L795 713L796 730M796 730L802 729L806 727L815 726L820 725M796 730L796 740L795 754M795 754L816 753M795 754L795 776M795 776L807 777L819 779M795 793L801 797L803 797L807 795L811 797L818 798M795 793L797 799L797 802L795 808L795 813L797 817M797 817L815 825M815 -17L816 4M816 4L816 28M816 28L816 33L815 43L818 49M818 49L816 66L814 80M814 80L816 97M816 97L814 112L816 130M816 130L816 152M816 201L815 205L816 214L816 219L817 225M817 225L818 230L817 233L815 242L814 245L815 250M815 250L821 274M821 274L823 277L823 283L818 288L820 293M820 293L814 322M814 322L819 343M819 343L817 361M817 361L815 371L817 386M817 386L819 393L817 401L816 403L816 411M816 411L817 435M817 435L816 447L814 456L814 465M814 465L817 482M817 482L821 505M815 536L817 560M817 560L820 571L820 578M820 578L817 584L818 587L816 592L819 600L816 604M816 604L817 630M817 630L818 643L817 657M817 657L816 677M816 677L817 699M817 699L820 725M820 725L816 753M816 753L819 779M819 779L818 798M818 798L815 825" fill="none" stroke="#616161" stroke-width="1" shape-rendering="crispEdges"/>
<polyline points="6.0,257.0 88.7,242.0 153.7,224.0 165.0,226.0" fill="none" stroke="#8a7210" stroke-width="1" stroke-linejoin="round" shape-rendering="crispEdges"/>
<polyline points="165.0,226.0 221.7,189.0 239.0,183.0 298.0,165.5 336.7,156.7 372.0,145.0 405.0,133.0" fill="none" stroke="#8a7210" stroke-width="1" stroke-linejoin="round" shape-rendering="crispEdges"/>
<polyline points="405.0,133.0 459.0,133.0 518.0,139.0 548.0,156.7 589.0,159.6 619.0,148.0 640.0,149.0" fill="none" stroke="#8a7210" stroke-width="1" stroke-linejoin="round" shape-rendering="crispEdges"/>
<polyline points="600.0,157.0 614.8,148.0 659.0,142.0 688.7,127.0 730.0,106.5 765.6,91.7 807.0,71.0" fill="none" stroke="#8a7210" stroke-width="1" stroke-linejoin="round" shape-rendering="crispEdges"/>
<polyline points="659.0,142.0 668.0,154.0 685.8,177.5 697.6,189.0 733.0,183.0 777.5,174.5 807.0,171.5" fill="none" stroke="#8a7210" stroke-width="1" stroke-linejoin="round" shape-rendering="crispEdges"/>
<polyline points="471.0,6.0 471.0,29.6 459.0,50.0 435.5,62.0 429.6,77.0 420.7,94.6 411.8,109.4 405.0,133.0 401.7,139.0 398.7,177.0 397.0,215.0 396.0,260.0 394.0,300.0 398.0,345.5 404.7,381.0 412.0,417.7 438.7,471.0 427.0,497.5 397.0,545.0 373.7,571.4 317.5,601.0 305.7,624.6" fill="none" stroke="#8a7210" stroke-width="1" stroke-linejoin="round" shape-rendering="crispEdges"/>
<polyline points="405.0,133.0 444.0,183.0 474.0,218.7 503.5,236.5 547.8,212.8 577.0,177.0 619.0,148.0 613.0,148.0 589.0,109.0 604.0,59.0 586.0,6.0" fill="none" stroke="#8a7210" stroke-width="1" stroke-linejoin="round" shape-rendering="crispEdges"/>
<polyline points="503.0,238.0 537.5,268.7 543.5,292.0 558.0,310.0 570.0,328.0 585.0,348.5" fill="none" stroke="#8a7210" stroke-width="1" stroke-linejoin="round" shape-rendering="crispEdges"/>
<polyline points="505.0,239.0 490.0,274.6 469.6,307.0 440.0,339.6 421.0,357.0 404.7,381.0" fill="none" stroke="#8a7210" stroke-width="1" stroke-linejoin="round" shape-rendering="crispEdges"/>
<polyline points="404.7,381.0 373.7,393.0 329.0,420.7 285.0,462.0 258.4,474.0 220.0,475.4 148.0,477.0 97.5,475.4 6.0,460.6" fill="none" stroke="#8a7210" stroke-width="1" stroke-linejoin="round" shape-rendering="crispEdges"/>
<polyline points="255.5,477.0 234.8,518.0 220.0,545.0 215.8,553.7 192.0,640.0 184.0,656.0" fill="none" stroke="#8a7210" stroke-width="1" stroke-linejoin="round" shape-rendering="crispEdges"/>
<polyline points="182.0,5.0 197.0,37.0 200.0,93.6 187.0,111.0 175.0,155.0 159.0,180.0 145.5,204.0 148.0,215.0 159.0,224.7 165.5,232.0 171.4,298.0 180.0,357.0 183.0,381.0 177.0,400.0 162.6,429.6 148.0,477.0 130.0,530.0 127.0,640.0" fill="none" stroke="#8a7210" stroke-width="1" stroke-linejoin="round" shape-rendering="crispEdges"/>
<polyline points="6.0,661.0 15.8,660.3 35.0,655.0 66.8,643.6 84.4,645.4 98.4,641.8 123.0,641.0 147.6,641.0 167.0,648.0 184.5,656.0 209.0,649.0 243.0,643.0 285.0,640.0 317.5,624.6 359.0,633.5 403.0,624.6 447.0,617.0 481.0,616.0 518.6,617.0 547.0,627.0 576.0,637.0 610.0,640.0 627.0,644.0 673.6,653.0 720.0,659.0 776.0,654.6 794.6,662.0" fill="none" stroke="#8a7210" stroke-width="1" stroke-linejoin="round" shape-rendering="crispEdges"/>
<polyline points="650.0,560.0 658.0,597.0 683.0,631.0 705.0,659.0 720.0,696.5 735.6,721.0 751.0,758.6 754.0,806.0" fill="none" stroke="#8a7210" stroke-width="1" stroke-linejoin="round" shape-rendering="crispEdges"/>
<polyline points="804.0,560.0 782.0,637.6 788.0,678.0 800.8,702.7" fill="none" stroke="#8a7210" stroke-width="1" stroke-linejoin="round" shape-rendering="crispEdges"/>
<polyline points="637.7,429.6 679.0,459.0 738.0,471.0 797.0,485.7 810.0,491.6" fill="none" stroke="#8a7210" stroke-width="1" stroke-linejoin="round" shape-rendering="crispEdges"/>
<polyline points="585.0,348.5 620.0,357.0 679.0,366.0 753.0,372.0 785.5,351.4 810.0,339.6" fill="none" stroke="#8a7210" stroke-width="1" stroke-linejoin="round" shape-rendering="crispEdges"/>
<polyline points="585.0,348.5 620.0,319.0 679.0,292.0 714.6,268.7 744.0,251.0 776.6,233.0 810.0,221.0" fill="none" stroke="#8a7210" stroke-width="1" stroke-linejoin="round" shape-rendering="crispEdges"/>
<polyline points="738.0,245.0 764.8,268.7 810.0,304.0" fill="none" stroke="#8a7210" stroke-width="1" stroke-linejoin="round" shape-rendering="crispEdges"/>
<polyline points="585.0,348.5 546.4,400.0 514.0,441.4 490.0,459.0 440.0,472.4 438.7,471.0" fill="none" stroke="#8a7210" stroke-width="1" stroke-linejoin="round" shape-rendering="crispEdges"/>
<polyline points="585.0,348.5 626.0,417.7 632.0,488.6 649.5,556.6 667.0,607.0 685.0,640.0" fill="none" stroke="#8a7210" stroke-width="1" stroke-linejoin="round" shape-rendering="crispEdges"/>
<polyline points="192.0,6.0 200.7,41.0 200.7,88.7 186.0,118.0 180.0,142.0" fill="none" stroke="#8a7210" stroke-width="1" stroke-linejoin="round" shape-rendering="crispEdges"/>
<polyline points="239.0,6.0 227.0,29.6 227.0,53.0 209.6,65.0" fill="none" stroke="#8a7210" stroke-width="1" stroke-linejoin="round" shape-rendering="crispEdges"/>
<polyline points="123.0,590.0 126.5,630.4 133.6,648.0 131.8,672.6" fill="none" stroke="#8a7210" stroke-width="1" stroke-linejoin="round" shape-rendering="crispEdges"/>
<polyline points="84.4,645.4 91.4,658.5 105.5,669.0 131.8,674.4 158.2,685.0 175.7,672.6 189.8,642.7 200.0,616.4" fill="none" stroke="#8a7210" stroke-width="1" stroke-linejoin="round" shape-rendering="crispEdges"/>
<polyline points="6.0,616.0 14.0,628.7 11.4,642.7 15.8,660.3" fill="none" stroke="#8a7210" stroke-width="1" stroke-linejoin="round" shape-rendering="crispEdges"/>
<polyline points="162.0,221.0 170.0,219.0 176.0,224.0 174.0,231.0 165.0,232.0 160.0,227.0 162.0,221.0" fill="none" stroke="#8a7210" stroke-width="1" stroke-linejoin="round" shape-rendering="crispEdges"/>
<polyline points="404.7,381.0 420.0,368.0 443.0,364.6 498.0,359.0 561.0,350.0 583.0,348.0" fill="none" stroke="#8a7210" stroke-width="1" stroke-linejoin="round" shape-rendering="crispEdges"/>
<polyline points="583.0,338.0 592.0,340.0 595.0,348.0 592.0,357.0 583.0,359.0 574.0,356.0 571.0,348.0 574.0,340.0 583.0,338.0" fill="none" stroke="#8a7210" stroke-width="1" stroke-linejoin="round" shape-rendering="crispEdges"/>
<defs><pattern id="msh" width="14" height="14" patternUnits="userSpaceOnUse"><rect width="14" height="14" fill="#004466"/><rect x="0" y="0" width="1" height="1" fill="#5c504c"/><rect x="6" y="0" width="1" height="1" fill="#000"/><rect x="7" y="0" width="1" height="1" fill="#000"/><rect x="9" y="0" width="1" height="1" fill="#5c504c"/><rect x="11" y="0" width="1" height="1" fill="#000"/><rect x="12" y="0" width="1" height="1" fill="#000"/><rect x="13" y="0" width="1" height="1" fill="#000"/><rect x="0" y="1" width="1" height="1" fill="#5c504c"/><rect x="1" y="1" width="1" height="1" fill="#5c504c"/><rect x="2" y="1" width="1" height="1" fill="#000"/><rect x="3" y="1" width="1" height="1" fill="#000"/><rect x="4" y="1" width="1" height="1" fill="#000"/><rect x="7" y="1" width="1" height="1" fill="#000"/><rect x="9" y="1" width="1" height="1" fill="#000"/><rect x="10" y="1" width="1" height="1" fill="#5c504c"/><rect x="11" y="1" width="1" height="1" fill="#000"/><rect x="12" y="1" width="1" height="1" fill="#000"/><rect x="0" y="2" width="1" height="1" fill="#000"/><rect x="1" y="2" width="1" height="1" fill="#000"/><rect x="4" y="2" width="1" height="1" fill="#000"/><rect x="6" y="2" width="1" height="1" fill="#5c504c"/><rect x="8" y="2" width="1" height="1" fill="#000"/><rect x="13" y="2" width="1" height="1" fill="#000"/><rect x="0" y="3" width="1" height="1" fill="#000"/><rect x="1" y="3" width="1" height="1" fill="#000"/><rect x="2" y="3" width="1" height="1" fill="#000"/><rect x="3" y="3" width="1" height="1" fill="#000"/><rect x="4" y="3" width="1" height="1" fill="#000"/><rect x="5" y="3" width="1" height="1" fill="#5c504c"/><rect x="6" y="3" width="1" height="1" fill="#000"/><rect x="8" y="3" width="1" height="1" fill="#000"/><rect x="9" y="3" width="1" height="1" fill="#000"/><rect x="11" y="3" width="1" height="1" fill="#000"/><rect x="12" y="3" width="1" height="1" fill="#000"/><rect x="13" y="3" width="1" height="1" fill="#000"/><rect x="1" y="4" width="1" height="1" fill="#000"/><rect x="3" y="4" width="1" height="1" fill="#000"/><rect x="6" y="4" width="1" height="1" fill="#000"/><rect x="8" y="4" width="1" height="1" fill="#000"/><rect x="9" y="4" width="1" height="1" fill="#5c504c"/><rect x="10" y="4" width="1" height="1" fill="#000"/><rect x="11" y="4" width="1" height="1" fill="#000"/><rect x="12" y="4" width="1" height="1" fill="#000"/><rect x="0" y="5" width="1" height="1" fill="#000"/><rect x="4" y="5" width="1" height="1" fill="#000"/><rect x="5" y="5" width="1" height="1" fill="#000"/><rect x="6" y="5" width="1" height="1" fill="#5c504c"/><rect x="8" y="5" width="1" height="1" fill="#000"/><rect x="12" y="5" width="1" height="1" fill="#000"/><rect x="0" y="6" width="1" height="1" fill="#000"/><rect x="1" y="6" width="1" height="1" fill="#000"/><rect x="2" y="6" width="1" height="1" fill="#5c504c"/><rect x="4" y="6" width="1" height="1" fill="#000"/><rect x="6" y="6" width="1" height="1" fill="#5c504c"/><rect x="7" y="6" width="1" height="1" fill="#000"/><rect x="8" y="6" width="1" height="1" fill="#000"/><rect x="9" y="6" width="1" height="1" fill="#000"/><rect x="10" y="6" width="1" height="1" fill="#000"/><rect x="11" y="6" width="1" height="1" fill="#000"/><rect x="0" y="7" width="1" height="1" fill="#000"/><rect x="1" y="7" width="1" height="1" fill="#000"/><rect x="3" y="7" width="1" height="1" fill="#5c504c"/><rect x="4" y="7" width="1" height="1" fill="#000"/><rect x="5" y="7" width="1" height="1" fill="#000"/><rect x="6" y="7" width="1" height="1" fill="#5c504c"/><rect x="8" y="7" width="1" height="1" fill="#000"/><rect x="9" y="7" width="1" height="1" fill="#000"/><rect x="10" y="7" width="1" height="1" fill="#000"/><rect x="12" y="7" width="1" height="1" fill="#000"/><rect x="13" y="7" width="1" height="1" fill="#000"/><rect x="1" y="8" width="1" height="1" fill="#000"/><rect x="4" y="8" width="1" height="1" fill="#5c504c"/><rect x="6" y="8" width="1" height="1" fill="#000"/><rect x="7" y="8" width="1" height="1" fill="#000"/><rect x="8" y="8" width="1" height="1" fill="#000"/><rect x="10" y="8" width="1" height="1" fill="#000"/><rect x="11" y="8" width="1" height="1" fill="#000"/><rect x="1" y="9" width="1" height="1" fill="#000"/><rect x="2" y="9" width="1" height="1" fill="#000"/><rect x="4" y="9" width="1" height="1" fill="#000"/><rect x="5" y="9" width="1" height="1" fill="#000"/><rect x="6" y="9" width="1" height="1" fill="#000"/><rect x="7" y="9" width="1" height="1" fill="#000"/><rect x="8" y="9" width="1" height="1" fill="#000"/><rect x="11" y="9" width="1" height="1" fill="#5c504c"/><rect x="12" y="9" width="1" height="1" fill="#000"/><rect x="13" y="9" width="1" height="1" fill="#000"/><rect x="0" y="10" width="1" height="1" fill="#000"/><rect x="1" y="10" width="1" height="1" fill="#000"/><rect x="4" y="10" width="1" height="1" fill="#000"/><rect x="10" y="10" width="1" height="1" fill="#000"/><rect x="12" y="10" width="1" height="1" fill="#000"/><rect x="13" y="10" width="1" height="1" fill="#000"/><rect x="2" y="11" width="1" height="1" fill="#000"/><rect x="4" y="11" width="1" height="1" fill="#5c504c"/><rect x="5" y="11" width="1" height="1" fill="#5c504c"/><rect x="6" y="11" width="1" height="1" fill="#000"/><rect x="7" y="11" width="1" height="1" fill="#5c504c"/><rect x="8" y="11" width="1" height="1" fill="#000"/><rect x="10" y="11" width="1" height="1" fill="#000"/><rect x="12" y="11" width="1" height="1" fill="#5c504c"/><rect x="0" y="12" width="1" height="1" fill="#000"/><rect x="1" y="12" width="1" height="1" fill="#5c504c"/><rect x="4" y="12" width="1" height="1" fill="#000"/><rect x="10" y="12" width="1" height="1" fill="#5c504c"/><rect x="11" y="12" width="1" height="1" fill="#5c504c"/><rect x="12" y="12" width="1" height="1" fill="#000"/><rect x="1" y="13" width="1" height="1" fill="#000"/><rect x="5" y="13" width="1" height="1" fill="#000"/><rect x="7" y="13" width="1" height="1" fill="#5c504c"/><rect x="9" y="13" width="1" height="1" fill="#000"/><rect x="10" y="13" width="1" height="1" fill="#5c504c"/><rect x="12" y="13" width="1" height="1" fill="#5c504c"/></pattern></defs>
<polygon points="6.0,704.6 11.0,701.0 19.7,698.3 28.0,698.3 30.2,702.5 27.4,708.0 35.0,706.7 46.4,704.6 45.0,715.0 50.6,716.6 52.0,725.0 59.0,724.3 70.3,727.8 76.0,736.2 67.5,743.3 78.7,750.3 87.0,741.9 98.4,746.0 105.4,751.7 107.0,758.0 170.0,762.0 240.0,762.0 239.5,757.0 236.5,756.7 229.1,749.4 218.8,742.0 208.4,737.5 201.0,731.6 199.6,722.8 204.0,716.8 215.8,706.5 221.7,699.1 226.2,684.3 227.6,674.0 224.7,669.6 214.3,674.0 205.5,676.9 202.5,682.9 199.6,687.3 195.1,693.2 189.2,693.2 186.3,688.8 180.3,688.8 176.6,684.3 178.9,679.9 187.7,678.4 192.2,672.5 196.6,669.6 204.0,666.6 209.9,660.7 212.9,656.3 214.3,653.3 217.3,650.3 221.7,653.3 229.1,651.8 239.5,647.4 249.8,645.9 258.7,650.3 273.4,648.9 285.3,650.3 289.8,647.4 298.5,651.7 304.6,652.9 306.4,641.8 308.3,632.0 310.8,623.4 313.2,622.1 319.4,624.6 320.6,632.0 320.6,641.8 324.3,648.0 329.2,652.9 334.1,659.0 337.8,661.5 344.0,660.3 346.0,654.0 351.0,650.0 356.0,649.0 353.8,657.8 366.1,652.9 372.0,646.0 378.0,640.0 375.0,632.0 380.0,636.0 383.0,640.0 386.0,631.0 389.0,634.0 388.0,641.0 393.0,643.0 398.0,643.0 392.0,648.0 403.0,646.7 420.0,645.5 441.0,649.0 461.0,656.0 476.0,666.0 490.0,677.0 504.0,689.0 510.0,700.0 513.0,711.0 521.0,711.0 533.0,719.0 550.0,709.0 567.0,697.0 584.0,686.0 590.0,677.0 595.9,674.6 597.8,676.2 600.4,675.0 606.3,673.7 608.2,675.4 608.9,676.1 613.5,677.8 615.9,678.4 616.8,679.8 620.0,683.9 622.9,684.5 624.8,685.6 626.4,685.3 630.8,687.9 632.6,687.0 634.7,688.5 637.3,691.6 638.4,694.5 641.9,694.6 641.7,698.7 641.9,701.2 646.5,702.2 647.3,704.3 649.1,708.8 649.6,708.1 651.1,711.8 652.7,712.4 656.0,717.1 656.2,718.2 657.3,719.9 657.6,722.9 658.1,728.1 658.4,728.3 662.3,728.6 663.2,732.8 667.6,731.6 668.7,735.8 669.3,736.2 670.7,737.0 674.3,740.1 676.1,740.8 676.2,745.7 678.5,746.8 679.4,750.9 681.4,750.2 682.6,753.9 681.9,756.2 682.4,759.2 681.7,762.9 684.4,763.1 686.8,762.8 692.0,761.6 694.3,760.5 697.1,760.8 698.1,762.2 700.1,762.5 703.1,764.6 703.9,766.1 705.9,768.6 704.9,773.0 706.0,775.8 709.3,777.6 707.0,778.8 708.3,782.7 710.4,787.5 711.3,787.5 713.7,790.1 712.7,794.4 715.1,795.8 714.8,800.8 716.3,802.7 716.0,806.0 6.0,806.0" fill="#004466" stroke="#000" stroke-width="1.2" stroke-linejoin="round"/>
<polyline points="595.9,674.6 597.8,676.2 600.4,675.0 606.3,673.7 608.2,675.4 608.9,676.1 613.5,677.8 615.9,678.4 616.8,679.8 620.0,683.9 622.9,684.5 624.8,685.6 626.4,685.3 630.8,687.9 632.6,687.0 634.7,688.5 637.3,691.6 638.4,694.5 641.9,694.6 641.7,698.7 641.9,701.2 646.5,702.2 647.3,704.3 649.1,708.8 649.6,708.1 651.1,711.8 652.7,712.4 656.0,717.1 656.2,718.2 657.3,719.9 657.6,722.9 658.1,728.1 658.4,728.3 662.3,728.6 663.2,732.8 667.6,731.6 668.7,735.8 669.3,736.2 670.7,737.0 674.3,740.1 676.1,740.8 676.2,745.7 678.5,746.8 679.4,750.9 681.4,750.2 682.6,753.9 681.9,756.2 682.4,759.2 681.7,762.9 684.4,763.1 686.8,762.8 692.0,761.6 694.3,760.5 697.1,760.8 698.1,762.2 700.1,762.5 703.1,764.6 703.9,766.1 705.9,768.6 704.9,773.0 706.0,775.8 709.3,777.6 707.0,778.8 708.3,782.7 710.4,787.5 711.3,787.5 713.7,790.1 712.7,794.4 715.1,795.8 714.8,800.8 716.3,802.7 716.0,806.0" fill="none" stroke="#000" stroke-width="2.2" stroke-dasharray="3 1 2 2"/>
<polyline points="804.4,557.6 803.4,559.6 799.4,562.7 802.5,566.8 802.6,565.7 802.2,568.3 801.0,569.6 799.5,576.1 801.5,576.8 799.6,574.7 794.9,578.8 798.6,581.9 800.8,579.0 800.4,584.3 801.0,583.1 799.1,584.3 800.1,590.7 796.0,589.1 796.5,592.4 797.5,595.7 796.5,594.7 798.2,596.4 796.8,597.2 801.9,597.3 795.7,602.0 795.5,602.6 795.0,602.7 796.6,603.0 791.5,604.2 794.5,606.4 794.6,611.0 796.2,611.6 801.4,610.6 794.8,612.8 797.4,616.5 792.6,616.2 790.7,618.4 788.3,621.2 794.8,624.3 795.2,626.0 792.3,623.5 799.4,628.1 797.5,630.7 797.5,631.9 794.3,630.1 793.9,631.8 792.3,638.8 793.5,634.8 793.3,637.5 799.2,640.4 797.7,640.6 800.9,644.3 795.2,643.9 793.3,646.3 796.1,647.9 793.7,651.7 796.5,656.5 797.2,655.4 802.6,656.5 806.4,658.4 806.0,660.0" fill="none" stroke="#000" stroke-width="2"/>
<polyline points="801.7,561.5 800.8,564.3 798.4,565.9 792.2,564.8 798.7,568.2 799.4,567.3 797.8,570.5 796.5,573.9 791.6,573.3 791.4,579.0 792.6,576.0 794.0,577.6 794.2,579.3 791.8,585.5 794.3,583.3 797.1,589.0 791.2,591.3 791.0,591.3 787.2,594.6 791.3,596.4 793.8,594.0 791.8,594.8 791.7,595.8 793.8,600.6 790.4,602.3 790.8,601.3 792.1,603.5 787.5,604.7 788.2,603.3 791.6,604.9 792.0,611.6 789.4,613.0 793.2,613.5 789.5,611.7 788.9,618.5 787.4,618.7 790.2,621.3 785.1,619.1 787.5,623.3 786.4,624.7 792.0,627.0 788.8,629.1 790.5,627.0 792.4,632.5 789.5,634.5 789.5,632.9 786.9,634.1 787.0,635.6 792.1,642.5 790.5,638.5 796.9,643.2 792.4,643.2 792.6,648.5 790.7,647.8 787.3,652.5 788.7,651.7 795.0,651.3 795.9,657.9 796.8,658.7 796.1,658.1 801.0,660.0" fill="none" stroke="#000" stroke-width="1.2"/>
<polyline points="797.8,561.9 793.9,560.2 789.0,564.3 789.8,566.6 790.2,569.0 790.6,571.5 794.4,571.5 791.5,574.6 787.7,575.3 789.6,575.1 787.8,579.1 789.3,578.8 786.1,583.3 791.6,582.9 788.6,583.2 790.1,585.5 790.2,589.0 784.0,591.2 783.2,594.6 787.7,593.7 787.3,596.4 789.4,599.7 786.0,597.6 790.6,598.8 788.9,598.7 789.1,602.6 782.9,604.6 782.5,603.0 781.9,603.8 782.0,609.9 786.7,606.6 788.9,608.4 788.0,615.4 788.1,613.2 785.1,615.1 782.0,620.2 779.9,618.1 782.5,619.4 785.3,620.1 786.7,625.6 786.2,627.1 786.3,628.4 789.8,628.1 786.6,631.2 785.0,629.5 785.7,632.6 782.9,637.7 782.5,634.9 783.7,640.0 786.7,639.8 788.7,645.6 786.5,644.2 789.3,647.2 784.6,648.1 784.9,647.9 785.8,650.6 789.8,652.4 790.5,658.1 793.5,656.3 794.1,657.4 796.0,660.0" fill="none" stroke="#000" stroke-width="1.2"/>
<polygon points="15.5,720 22,716 32,717 39.4,722 35,728 25,729 18,726" fill="#5c504c" stroke="#000" stroke-width="1"/>
<polygon points="802.0,560.0 806.0,560.0 806.0,658.0 801.0,658.0 802.0,620.0 801.0,590.0" fill="#004466" stroke="#000" stroke-width="1"/>
<polyline points="784.0,651.0 787.0,660.0 785.0,670.0 788.0,680.0 787.0,690.0 791.0,700.0 790.0,712.0 793.0,722.0 789.0,730.0" fill="none" stroke="#000" stroke-width="4"/>
<polyline points="784.0,651.0 787.0,660.0 785.0,670.0 788.0,680.0 787.0,690.0 791.0,700.0 790.0,712.0 793.0,722.0 789.0,730.0" fill="none" stroke="#004466" stroke-width="2"/>
<polygon points="205.5,677.0 214.3,674.0 224.7,669.6 227.6,674.0 226.2,684.3 221.7,699.1 215.8,706.5 204.0,716.8 199.6,722.8 201.0,731.6 208.4,737.5 218.8,742.0 229.1,749.4 236.5,756.7 239.5,760.0 225.0,760.0 205.0,745.0 190.0,735.0 182.0,725.0 181.8,716.8 192.0,703.5 199.6,696.0" fill="url(#msh)" stroke="none"/>
<polygon points="146.8,724.0 149.4,723.7 152.2,722.4 159.2,723.0 160.6,724.8 162.2,726.4 163.4,729.3 165.4,728.0 167.5,729.6 171.6,733.8 173.7,731.9 175.3,737.4 176.7,737.3 180.3,739.1 182.3,740.8 184.8,742.7 188.4,744.4 186.8,744.1 192.2,748.0 190.7,752.0 190.8,753.5 190.7,754.1 186.9,759.2 184.4,761.2 181.7,760.8 181.7,762.0 179.8,760.0 174.4,758.5 173.3,760.0 168.7,761.8 168.0,760.9 164.2,758.9 160.7,759.3 159.3,759.7 157.2,761.5 156.9,758.6 152.1,758.5 150.7,762.1 148.8,758.7 149.4,752.9 151.5,751.8 149.0,749.7 149.4,747.1 150.5,744.6 151.3,741.6 151.0,740.0" fill="url(#msh)" stroke="none"/>
<polygon points="66.3,746.4 67.4,742.2 67.8,742.2 72.4,740.9 74.4,739.2 76.5,739.8 81.0,738.6 82.7,740.3 83.6,740.2 88.8,739.5 91.3,741.8 94.0,740.4 93.2,742.7 98.8,741.3 98.2,740.3 103.1,740.9 107.0,742.4 104.1,745.3 105.2,749.0 108.1,749.8 107.4,753.2 108.5,757.0 105.5,756.8 108.4,759.1 105.9,758.2 104.6,760.1 98.7,760.7 97.1,758.7 95.3,758.4 91.5,761.6 91.2,757.9 89.0,757.9 84.5,761.8 83.2,759.1 79.6,759.5 76.0,762.2 73.2,759.7 73.7,759.6 72.2,758.9 69.6,761.7 65.0,760.0" fill="url(#msh)" stroke="none"/>
<polygon points="114.3,746.4 115.3,743.0 115.6,743.7 120.1,743.1 122.0,742.2 124.0,741.3 128.5,740.0 130.2,741.5 131.1,741.2 136.3,740.3 138.8,742.5 141.5,741.3 140.5,745.3 146.0,745.8 145.2,746.7 147.8,750.1 149.5,754.4 146.4,757.7 147.4,761.9 147.3,760.1 143.6,760.9 141.8,762.1 135.9,759.4 135.9,759.1 133.4,758.2 132.2,760.1 126.3,760.7 124.7,758.7 122.9,758.4 119.2,761.6 118.9,757.9 116.7,757.9 113.0,760.0" fill="url(#msh)" stroke="none"/>
<polygon points="162.0,750.0 180.0,746.0 196.0,760.0 160.0,760.0" fill="#004466" stroke="#000" stroke-width="1"/>
<polyline points="249.8,679.2 254.2,688.8 252.8,699.1 246.8,711.0 239.5,718.3 233.5,725.7 226.2,730.1" fill="none" stroke="#000" stroke-width="1.5" stroke-dasharray="5 2"/>
<polyline points="227.6,662.5 235.0,664.0" fill="none" stroke="#000" stroke-width="1.5" stroke-dasharray="5 2"/>
<polyline points="241.0,663.0 249.8,664.0" fill="none" stroke="#000" stroke-width="1.5" stroke-dasharray="5 2"/>
<polyline points="257.2,661.5 270.0,663.0 285.3,665.0" fill="none" stroke="#000" stroke-width="1.5" stroke-dasharray="5 2"/>
<polyline points="417.0,643.0 425.0,640.0 434.0,641.0 442.0,639.0 450.0,638.0 455.0,636.0" fill="none" stroke="#000" stroke-width="4.5" stroke-linejoin="round"/>
<polyline points="470.0,658.0 477.0,656.0 484.0,660.0 490.0,664.0 496.0,669.0 502.0,676.0 506.0,679.0" fill="none" stroke="#000" stroke-width="4.5" stroke-linejoin="round"/>
<polyline points="483.0,660.0 486.0,654.0 491.0,652.0" fill="none" stroke="#000" stroke-width="4.5" stroke-linejoin="round"/>
<polyline points="508.0,693.0 511.0,700.0 513.0,708.0" fill="none" stroke="#000" stroke-width="4.5" stroke-linejoin="round"/>
<polyline points="544.0,711.0 552.0,706.0 560.0,702.0" fill="none" stroke="#000" stroke-width="4.5" stroke-linejoin="round"/>
<polyline points="417.0,643.0 425.0,640.0 434.0,641.0 442.0,639.0 450.0,638.0 455.0,636.0" fill="none" stroke="#004466" stroke-width="2.2" stroke-linejoin="round"/>
<polyline points="470.0,658.0 477.0,656.0 484.0,660.0 490.0,664.0 496.0,669.0 502.0,676.0 506.0,679.0" fill="none" stroke="#004466" stroke-width="2.2" stroke-linejoin="round"/>
<polyline points="483.0,660.0 486.0,654.0 491.0,652.0" fill="none" stroke="#004466" stroke-width="2.2" stroke-linejoin="round"/>
<polyline points="508.0,693.0 511.0,700.0 513.0,708.0" fill="none" stroke="#004466" stroke-width="2.2" stroke-linejoin="round"/>
<polyline points="544.0,711.0 552.0,706.0 560.0,702.0" fill="none" stroke="#004466" stroke-width="2.2" stroke-linejoin="round"/>
<polygon points="299.0,58.0 306.0,55.0 312.0,60.0 316.0,68.0 320.0,73.0 319.0,80.0 322.0,88.0 324.0,95.0 319.0,93.0 314.0,84.0 310.0,76.0 305.0,68.0 301.0,63.0" fill="#2b4662" stroke="#1b3048" stroke-width="1"/>
<polygon points="368.0,260.0 372.0,257.0 378.0,261.0 385.0,265.0 392.0,269.0 397.0,275.0 392.0,275.0 384.0,271.0 376.0,267.0 370.0,264.0" fill="#2b4662" stroke="#1b3048" stroke-width="1"/>
<polygon points="439.0,377.0 441.0,370.0 445.0,365.0 449.0,363.0 451.0,367.0 447.0,371.0 444.0,376.0" fill="#2b4662" stroke="#1b3048" stroke-width="1"/>
<polygon points="424.0,413.0 427.0,415.0 429.0,423.0 431.0,433.0 428.0,432.0 426.0,423.0" fill="#2b4662" stroke="#1b3048" stroke-width="1"/>
<polygon points="526.0,503.0 530.0,507.0 534.0,512.0 536.0,520.0 533.0,528.0 536.0,538.0 531.0,536.0 527.0,528.0 529.0,517.0 525.0,510.0" fill="#2b4662" stroke="#1b3048" stroke-width="1"/>
<polygon points="541.0,601.0 546.0,606.0 552.0,612.0 557.0,606.0 561.0,605.0 560.0,612.0 564.0,615.0 556.0,619.0 545.0,620.0 541.0,612.0" fill="#2b4662" stroke="#1b3048" stroke-width="1"/>
<polygon points="605.0,309.0 610.0,300.0 613.0,292.0 618.0,286.0 624.0,288.0 628.0,294.0 622.0,298.0 619.0,305.0 610.0,313.0" fill="#2b4662" stroke="#1b3048" stroke-width="1"/>
<polygon points="121.0,660.0 126.0,653.0 133.0,652.0 136.0,657.0 134.0,664.0 128.0,668.0 122.0,667.0" fill="#2b4662" stroke="#1b3048" stroke-width="1"/>
<polygon points="42.0,681.0 48.0,680.0 52.0,686.0 50.0,690.0 45.0,688.0" fill="#2b4662" stroke="#1b3048" stroke-width="1"/>
<polygon points="58.0,686.0 62.0,690.0 64.0,698.0 70.0,703.0 78.0,704.0 84.0,708.0 82.0,711.0 72.0,709.0 64.0,704.0 59.0,696.0" fill="#2b4662" stroke="#1b3048" stroke-width="1"/>
<polygon points="144.0,697.0 151.0,696.0 155.0,702.0 152.0,708.0 146.0,713.0 141.0,710.0 145.0,704.0" fill="#2b4662" stroke="#1b3048" stroke-width="1"/>
<polygon points="786.0,728.0 791.0,729.0 796.0,742.0 795.0,754.0 789.0,750.0 785.0,738.0" fill="#2b4662" stroke="#1b3048" stroke-width="1"/>
<polyline points="6.0,105.4 155.0,105.4 161.0,113.0 160.0,122.0 153.0,135.0 138.0,149.0 186.5,149.0" fill="none" stroke="#000" stroke-width="1" stroke-linejoin="round" shape-rendering="crispEdges"/>
<polyline points="200.7,6.4 199.8,7.4 199.1,8.4 198.8,9.3 198.9,10.0 199.3,10.6 200.2,11.1 201.4,11.5 202.8,11.8 202.5,6.9 203.8,7.9 205.2,9.6 206.4,11.9 207.4,14.6 207.9,17.3 208.0,19.8 207.7,21.7 206.3,21.4 205.2,22.3 204.2,22.9 203.3,23.2 202.6,23.4 202.1,23.3 202.0,23.1 202.1,22.8 202.6,22.5 203.4,22.2 204.5,22.1 205.8,22.1 208.2,25.9 208.8,26.4 209.4,27.0 210.0,27.6 210.5,28.2 210.9,28.8 211.3,29.8 211.5,30.4 211.6,31.1 211.6,31.9 211.5,32.6 211.3,33.3 211.1,34.0 210.9,34.8 210.6,35.5 211.0,41.7 209.9,42.2 208.8,42.1 208.0,41.4 207.4,40.4 207.3,39.2 207.5,38.1 208.2,37.3 209.2,36.9 210.4,37.1 212.6,39.5 214.0,40.5 215.2,41.7 216.2,43.1 216.8,44.7 217.1,46.4 217.0,48.1 216.5,49.8 215.7,51.3 214.7,52.7 213.4,53.8 212.3,54.7 211.4,55.3 210.7,55.6 212.0,56.7 211.6,57.0 211.2,57.1 211.0,56.9 211.0,56.6 211.3,56.2 211.8,55.8 212.5,55.4 213.5,55.1 217.1,57.8 218.0,58.0 218.3,57.9 219.1,57.7 219.9,57.6 220.6,57.5 221.4,57.6 222.1,57.7 222.8,58.0 223.4,58.3 224.1,58.8 224.7,59.3 225.3,59.9 225.9,60.5 226.4,61.2 226.9,62.3 227.4,63.3 228.0,64.1 228.5,64.9 226.5,61.5 226.3,62.2 226.2,62.9 226.4,63.6 226.8,64.4 227.3,65.2 228.0,66.0 228.7,66.8 230.1,62.2 230.7,63.7 231.0,66.0 230.9,68.9 230.5,71.9 229.7,74.6 228.8,76.7 227.8,77.9 226.6,74.1 225.4,74.5 224.4,74.8 223.7,75.1 223.4,75.4 223.5,75.8 223.8,76.2 224.6,76.8 225.5,77.4 226.6,78.1 228.2,76.5 229.0,77.5 229.8,78.7 230.5,80.0 231.2,83.7 230.6,85.2 229.8,86.5 228.8,87.8 227.6,88.9 226.2,89.7 224.8,90.4 223.4,90.8 222.0,91.0 220.7,91.0 219.4,90.7 218.2,90.3 217.3,89.9 216.6,89.4 216.2,89.0 216.0,88.7 216.1,88.5 216.4,88.5 216.8,88.8 217.4,89.2 218.0,90.0 218.7,90.9 219.3,92.1 217.3,96.2 217.5,97.3 217.6,98.3 216.2,100.2 215.6,100.9 215.0,101.4 214.3,101.7 213.6,101.9 212.9,101.9 212.1,101.8 211.3,101.5 210.4,101.0 209.6,100.5 208.7,99.9 207.8,99.3 206.9,99.0 206.1,98.6 205.3,98.4 204.5,98.3 203.8,98.3 201.7,99.9 201.6,100.6 201.7,101.4 201.9,102.2 202.2,103.0 202.5,103.9 204.1,101.3 204.3,102.4 204.4,103.7 204.4,105.1 204.2,106.6 203.9,108.1 203.5,109.6 202.9,111.0 202.2,112.4 201.5,113.6 200.7,114.7 199.8,115.6 199.0,116.3 198.1,116.8 196.7,116.9 195.4,116.7 194.5,116.4 193.9,116.0 193.6,115.7 193.7,115.3 195.2,114.2 195.9,114.4 196.7,115.0 197.6,115.9 198.4,117.1 197.3,120.4 197.4,121.5 197.4,122.7 197.3,123.8 197.0,124.8 196.4,125.7 195.7,126.5 194.8,127.1 193.8,127.6 192.7,127.9 191.6,128.1 191.1,127.2 190.0,127.8 189.3,128.4 188.6,129.0 188.0,129.7 187.6,130.3 187.3,131.0 187.1,131.7 187.0,132.4 187.1,133.2 187.4,133.9 187.7,134.7 188.2,135.5 188.7,136.4 189.2,137.2 189.9,138.0 190.7,138.9 191.4,139.7 191.9,140.6 192.4,141.4 192.6,142.2 192.7,142.9 192.5,143.6 192.2,144.3 191.7,144.9 191.0,144.7 190.4,145.5 189.6,146.3 188.8,147.1 187.8,147.9 186.6,148.7 185.5,149.5 184.6,150.3 183.8,151.0 183.4,151.8 183.2,152.5 183.3,153.2 183.8,153.9 184.5,154.5 185.4,155.2 186.6,155.8 187.9,156.4 192.5,152.9 192.5,153.9 192.2,155.1 191.8,156.5 191.1,157.9 190.3,159.5 189.4,161.0 188.3,162.5 187.1,163.9 185.8,165.2 184.5,166.4 183.2,167.3 181.9,168.2 180.7,168.8 179.6,169.2 182.1,165.1 180.9,165.1 179.8,165.1 178.7,165.1 177.9,165.3 176.7,166.3 176.3,166.9 176.0,167.6 176.0,168.4 176.2,169.3 176.5,170.2 177.0,171.2 177.5,172.3 178.8,172.3 180.0,173.9 180.8,175.3 181.2,176.7 181.1,177.9 180.4,178.8 179.3,179.5 177.8,179.8 175.9,179.9 172.9,182.1 172.1,182.1 171.4,181.3 171.4,180.6 171.8,179.9 172.4,179.3 173.1,179.3 173.7,179.7 174.4,181.0 174.6,182.3 174.8,183.7 174.7,185.2 174.4,186.7 174.0,188.1 173.3,189.5 172.5,190.7 171.4,191.9 170.3,192.9 169.0,193.7 167.7,194.3 166.3,194.7 165.0,194.9 163.3,194.6 162.6,194.7 162.1,194.8 161.7,194.7 161.4,194.5 161.3,194.4 161.3,194.2 161.4,194.1 161.6,194.0 161.8,194.1 161.9,194.3 162.0,194.6 162.1,195.1 162.0,195.7 159.3,199.3 159.7,200.7 160.0,202.0 160.2,203.2 160.2,204.2 159.9,204.9 159.5,205.5 158.9,205.9 158.0,206.0 156.9,205.9 156.2,203.2 155.3,204.3 155.6,209.0 154.8,209.9 154.0,210.6 153.2,211.0 152.6,211.3 152.1,211.4 151.8,211.3 151.7,211.1 151.9,210.9 152.4,210.7 153.1,210.5 154.0,210.4 155.1,210.4 157.2,213.0 158.2,213.5 159.2,214.0 160.1,214.7 160.9,215.5 161.5,216.4 161.8,217.4 162.0,218.5 161.9,219.6 161.7,220.7 159.6,222.5 158.5,222.3 157.2,221.6 155.5,220.2 154.3,219.1 153.9,218.8 154.1,219.3 154.8,220.7 155.8,222.8 159.4,222.1 158.4,223.8 156.7,225.8 154.4,227.8 151.8,229.5 149.4,230.6 147.5,231.0 147.6,229.7 146.9,229.3 146.6,228.7 146.7,228.2 147.0,227.7 145.9,228.5 146.4,228.1 147.0,228.1 147.7,228.4 147.6,232.9 148.0,233.7 148.4,234.5 148.7,235.3 148.9,236.1 149.1,236.9 149.1,237.7 149.0,238.4 148.9,239.1 148.6,239.8 148.2,240.4 147.7,241.1 147.1,241.7 146.5,242.3 145.9,242.9 144.9,244.8 144.2,245.3 143.4,244.3 142.7,244.0 142.1,243.9 141.5,243.7 140.9,243.7 140.5,243.8 140.1,244.0 139.7,244.3 139.3,244.7 139.0,245.2 138.7,245.8 138.4,246.5 138.1,247.2 137.7,248.0 139.7,248.1 139.4,249.9 138.6,251.6 137.6,253.1 136.2,254.3 134.5,255.2 132.7,255.6 134.5,254.5 132.9,255.6 131.1,256.3 129.3,256.6 128.0,256.7 126.8,256.7 125.9,256.5 125.2,256.2 124.9,255.9 124.9,255.6 125.2,255.5 125.7,255.5 126.5,255.8 127.5,256.2 128.5,256.9 130.0,256.3 131.1,258.0 131.7,260.3 131.7,263.2 131.0,266.0 129.7,268.6 127.6,270.6 125.7,271.7 123.6,271.7 122.0,271.1 120.9,270.2 120.4,269.0 120.5,267.8 121.3,266.9 122.6,266.4 124.1,266.5 125.7,267.3 125.1,273.7 125.6,274.6 126.1,275.6 126.4,276.5 126.6,277.4 126.7,278.2 126.7,278.0 126.6,278.7 126.3,279.4 125.8,280.1 125.2,280.7 124.4,281.4 123.6,282.0 122.7,282.6 121.6,284.5 120.6,285.1 119.8,285.5 119.0,285.9 118.5,286.3 118.3,286.7 118.3,287.0 118.5,287.5 119.0,288.0 119.7,288.6 120.4,289.2 121.1,291.3 121.4,292.8 121.1,293.8 120.8,294.8 120.4,295.6 120.0,296.3 119.5,296.9 118.9,297.3 118.2,297.5 117.4,297.5 116.6,297.4 115.7,297.2 114.7,296.9 113.8,296.5 111.6,296.6 110.1,294.8 108.9,293.3 108.3,292.5 108.1,292.5 108.4,293.5 108.0,295.5 109.4,297.6 109.3,300.3 109.8,301.7 109.8,302.8 109.4,303.4 108.4,303.4 107.0,303.1 105.3,302.5 101.1,304.4 100.1,303.7 99.6,303.0 99.5,302.4 99.7,301.9 100.2,301.8 100.9,302.0 101.7,302.7 101.3,303.3 102.9,302.9 103.6,304.3 104.0,305.9 104.2,307.7 104.1,309.5 103.8,311.4 103.1,313.3 102.2,315.1 101.0,316.7 99.7,318.0 98.2,319.2 96.7,320.0 95.2,320.5 96.1,315.8 94.8,316.0 93.5,316.1 92.4,316.4 91.5,316.7 91.2,316.4 90.6,316.9 90.3,317.5 90.2,318.3 90.3,319.3 90.6,320.4 91.0,321.5 91.4,322.8 92.0,324.1 92.4,325.3 92.8,326.4 93.0,327.5 93.1,328.4 93.0,329.3 92.8,330.0 92.5,330.6 91.9,331.1 91.2,331.4 90.3,331.7 89.3,331.8 88.2,331.8 87.3,330.4 86.5,331.3 86.7,335.9 86.0,336.5 85.3,336.7 84.8,336.5 84.4,336.2 84.3,335.6 84.4,335.1 84.9,334.7 85.6,334.6 86.6,334.8 88.8,338.9 90.1,339.3 91.2,339.8 91.9,340.3 92.4,340.9 91.4,345.3 90.5,345.4 89.4,345.4 88.1,345.1 86.8,344.8 84.7,345.5 83.9,345.5 83.1,345.5 82.4,345.6 81.9,345.7 81.4,345.9 81.1,346.2 80.8,346.6 80.7,347.1 80.6,347.7 80.5,348.4 80.5,349.2 80.5,350.1 82.2,349.2 82.2,350.8 81.6,352.5 80.5,354.4 79.0,356.1 79.9,354.7 80.3,356.7 80.3,358.4 80.3,361.2 79.5,362.1 78.7,362.6 77.9,362.8 77.2,362.7 76.6,362.4 76.3,361.8 76.3,361.1 76.5,360.4 77.1,359.7 78.1,359.2 85.5,358.3 85.8,359.3 85.6,360.8 85.0,362.6 84.0,364.7 82.6,366.9 81.0,369.0 79.3,370.7 77.7,372.0 76.2,372.7 78.1,368.3 76.5,368.0 75.1,367.9 74.0,367.9 73.2,368.2 72.8,368.8 72.7,369.7 73.0,370.8 73.6,372.1 74.4,373.5 75.1,374.9 75.9,373.5 77.2,373.4 78.2,373.5 78.6,374.1 78.5,375.1 77.9,376.4 77.1,377.9 77.2,380.3 77.1,381.2 76.9,381.9 76.9,382.6 76.9,383.1 77.0,383.5 77.3,383.9 77.7,384.1 78.2,384.2 78.9,384.3 79.6,384.4 80.5,384.4 82.3,385.5 83.5,385.5 84.6,385.5 85.4,385.8 86.0,386.2 86.2,387.0 86.1,387.9 85.8,389.0 85.1,389.7 84.0,389.8 82.9,390.0 81.9,390.2 81.0,390.5 80.3,390.9 79.7,391.4 79.3,392.0 79.1,392.7 79.0,393.5 79.1,394.4 79.4,395.4 79.7,396.4 80.1,397.5 80.6,398.6 80.9,399.6 81.1,400.6 81.3,401.5 81.4,402.4 81.4,403.2 81.2,404.0 80.9,404.6 80.4,405.2 79.8,405.6 75.3,402.7 76.3,402.7 77.3,402.8 78.4,403.0 79.4,403.0 80.3,403.0 81.3,402.9 82.1,402.7 82.7,402.3 83.3,401.8 81.3,399.6 81.5,400.4 81.9,401.2 82.2,402.0 84.8,398.0 85.9,400.0 86.5,402.4 86.4,405.0 85.8,407.6 84.5,409.9 82.9,411.7 81.0,412.9 80.5,408.1 79.8,408.7 79.1,409.2 78.4,409.8 77.9,410.3 77.4,411.0 77.1,411.6 76.9,412.3 76.8,413.0 76.8,413.7 77.0,414.5 77.2,415.3 77.6,416.1 78.0,416.9 78.4,417.6 79.5,417.4 80.5,417.2 81.5,417.2 82.3,417.3 83.0,417.6 83.5,418.2 83.8,418.9 84.0,419.9 84.1,420.9 84.1,422.0 85.0,424.1 84.9,425.2 82.9,423.4 82.2,423.6 81.8,423.8 81.6,424.2 81.7,424.6 82.0,425.2 82.6,425.9 83.3,426.8 84.0,427.8 84.8,428.9 85.5,430.2 86.0,431.4 86.2,432.6 86.0,433.7 85.5,434.7 84.7,435.6 83.7,436.2 82.4,436.7 81.0,437.1 78.8,439.7 77.6,439.5 76.8,438.9 77.7,440.9 77.2,440.3 77.2,439.6 77.6,438.8 78.6,438.3 78.9,436.7 79.7,437.3 80.5,438.1 81.4,439.1 82.4,440.2 83.4,441.5 84.4,442.9 85.4,444.4 86.4,445.9 87.2,447.5 88.0,449.0 88.7,450.5 89.2,451.9 89.7,453.1 90.0,454.2 90.1,455.2 87.2,451.4 86.4,452.7 85.9,453.9 85.7,454.5 86.2,455.0 87.2,455.3 88.6,455.4 87.8,450.6 88.8,451.1 89.9,451.8 91.0,452.8 92.1,453.9 93.2,455.3 94.2,456.7 95.1,458.3 95.9,460.0 96.5,461.7 97.0,463.4 97.3,465.0 97.4,466.5 97.4,467.9 97.3,469.1 94.6,465.2 94.2,466.2 93.8,467.2 93.5,468.2 93.3,469.1 93.2,469.9 93.3,470.7 93.5,471.4 93.9,472.0 94.7,468.9 94.6,469.7 94.6,470.6 94.7,471.6 94.9,472.6 95.1,473.6 96.2,473.7 97.1,475.5 97.7,477.1 97.7,478.6 97.2,479.6 96.0,480.3 94.4,480.4 92.5,480.2 91.5,478.7 90.6,479.0 89.8,479.2 89.0,479.5 88.3,479.9 87.7,480.3 87.1,480.7 86.1,482.8 86.1,483.5 86.3,484.3 86.6,485.0 87.0,485.7 87.4,486.5 88.0,487.2 88.5,487.9 89.3,488.7 90.3,489.4 91.1,490.1 91.8,490.9 92.4,491.6 92.8,492.4 93.0,493.1 93.0,493.8 92.8,494.6 92.4,495.3 91.8,496.0 91.1,496.8 89.9,498.5 88.8,498.5 84.1,502.7 82.4,501.4 81.7,499.7 81.9,498.0 82.9,496.8 84.5,496.3 86.3,496.7 87.9,498.1 85.2,503.9 85.6,505.2 85.7,506.2 85.5,507.0 84.9,507.4 84.0,507.6 82.7,507.5 81.3,507.2 80.0,507.1 79.0,507.2 78.0,507.4 77.2,507.6 76.6,508.0 76.1,508.6 75.8,509.2 75.6,510.0 75.6,510.8 75.6,511.7 75.6,512.7 79.5,509.9 79.4,511.8 78.6,513.9 77.1,516.2 75.2,518.3 73.0,519.9 70.8,521.0 68.8,521.3 67.4,521.1 66.8,520.9 66.5,520.5 66.5,519.9 66.8,519.3 67.3,518.6 67.9,518.1 68.6,517.7 69.2,517.7 69.7,517.9 69.9,518.4 67.1,522.3 67.7,524.0 68.3,524.9 68.5,526.4 68.3,527.6 67.5,528.5 66.2,529.0 64.6,529.3 62.8,529.2 62.0,528.2 61.0,528.4 60.1,528.7 59.5,529.2 59.1,529.8 58.9,530.6 59.0,531.5 59.3,532.5 59.8,533.7 60.4,534.8 60.8,535.9 61.1,537.0 61.3,537.9 61.3,538.8 61.1,539.5 60.7,540.1 60.1,540.6 59.6,540.5 58.7,540.9 57.6,541.3 56.5,541.5 55.2,541.8 52.3,547.2 51.8,547.5 51.4,547.5 51.1,547.4 51.0,547.1 51.0,546.7 51.1,546.2 51.3,545.8 51.5,545.4 51.8,545.1 52.1,545.0 52.4,545.1 52.6,545.4 52.8,545.9 51.3,550.5 51.5,551.5 51.7,552.6 51.6,553.8 51.3,554.9 50.8,555.9 50.1,556.9 49.3,557.6 48.4,558.3 45.7,562.5 44.5,562.4 43.6,561.9 44.8,563.4 44.2,562.8 43.8,562.0 43.7,561.1 44.0,560.2 44.7,559.6 45.7,559.2 46.9,559.3 49.5,565.0 50.3,565.5 51.1,566.0 51.9,566.6 52.4,567.1 52.9,567.8 53.2,568.4 50.8,573.3 50.0,573.3 49.2,573.1 48.4,572.7 47.5,572.3 46.7,571.8 45.8,571.2 44.8,570.4 41.8,571.4 40.5,572.1 39.8,572.8 39.8,573.5 40.5,574.3 41.7,575.0 43.4,575.7 44.7,576.4 45.1,577.1 45.5,577.9 45.8,578.6 46.0,579.3 46.1,579.4 46.4,580.1 46.6,580.8 46.7,581.5 46.7,582.3 46.7,583.1 46.6,583.9 46.4,584.7 46.2,585.5 47.8,591.4 47.3,591.9 46.8,591.9 46.3,591.5 45.0,589.2 45.4,588.4 45.9,587.7 46.5,587.3 47.0,587.2 47.5,587.6 45.1,593.2 45.4,594.2 44.3,594.5 186.0,594.5 177.0,615.8 186.0,640.0 192.0,655.0 197.0,668.0" fill="none" stroke="#000" stroke-width="1" stroke-linejoin="round" shape-rendering="auto"/>
<polyline points="203.6,103.5 310.0,104.0 311.5,88.7 325.0,91.6 420.0,90.0 518.0,94.0 640.0,96.0 786.0,95.0 807.0,97.6" fill="none" stroke="#000" stroke-width="1" stroke-linejoin="round" shape-rendering="crispEdges"/>
<polyline points="217.5,59.1 219.7,56.7 222.3,53.1 223.0,52.2 225.5,48.5 229.0,46.4 230.7,44.0 233.3,42.3 236.3,42.7 239.0,41.5 242.3,39.1 245.5,39.2 247.6,37.1 251.7,39.1 254.4,41.2 257.3,42.4 259.6,43.4 262.7,44.9 266.5,45.4 268.0,47.9 272.6,50.6 274.9,52.6 277.1,50.8 279.2,49.2 282.2,47.8 281.5,45.0 280.9,42.2 279.6,37.6 279.1,36.3 278.3,32.6 280.5,30.1 283.3,28.9 284.8,26.1 288.5,26.1 289.5,23.9 292.7,20.7 295.0,20.1 298.7,16.8 301.2,14.9 304.4,13.6 307.8,13.0 307.0,10.0 307.0,6.0" fill="none" stroke="#000" stroke-width="1" stroke-linejoin="round" shape-rendering="crispEdges"/>
<polyline points="635.0,95.2 638.2,94.4 640.5,94.1 645.1,94.0 647.8,91.9 650.3,91.2 652.5,90.0 655.5,90.7 659.7,89.6 662.6,87.4 664.6,87.3 668.5,86.7 671.8,84.2 674.2,84.3 677.0,82.4 679.4,80.2 682.9,79.7 684.6,76.6 687.8,75.1 690.3,73.7 692.0,70.8 694.1,67.9 695.1,64.6 698.2,61.1 698.9,60.0 701.6,57.6 704.2,54.9 707.5,52.4 709.1,49.4 712.3,46.6 714.4,45.9 717.0,43.9 720.8,41.4 721.8,40.0 725.9,39.2 727.5,37.0 730.0,35.6 732.4,34.5 736.8,33.4 739.1,31.6 740.2,28.4 744.7,27.5 746.2,26.0 749.2,23.9 751.2,20.8 754.1,18.8 756.6,18.6 760.1,14.4 763.1,12.3 761.4,11.3 757.2,9.4 755.4,8.6 750.6,6.5 748.0,6.0" fill="none" stroke="#000" stroke-width="1" stroke-linejoin="round" shape-rendering="crispEdges"/>
<polyline points="764.2,13.5 765.4,17.7 766.1,21.5 766.9,23.6 770.9,26.9 773.1,28.8 774.4,32.0 777.5,34.9 779.3,36.4 782.7,40.0 786.5,40.7 789.6,39.7 792.2,38.7 794.0,39.2 797.4,36.9 802.0,37.2 803.6,36.4 807.0,34.0" fill="none" stroke="#000" stroke-width="1" stroke-linejoin="round" shape-rendering="crispEdges"/>
<polyline points="588.6,239.6 588.4,235.5 587.9,233.3 589.2,230.5 589.5,227.5 589.7,224.6 591.0,220.8 591.1,218.4 593.2,217.1 597.3,215.5 600.1,215.4 603.0,213.7 604.4,213.6 608.6,211.9 608.5,207.7 610.9,204.2 612.9,201.2 613.7,199.3 616.4,197.9 619.8,195.0 621.6,193.4 624.3,192.0 625.1,188.7 629.2,187.9 632.2,186.8 635.8,187.1 637.2,186.7 640.6,185.1 644.0,184.3 646.4,185.1 650.4,182.7 653.6,182.0 655.7,182.6 659.2,180.2 661.8,179.1 664.3,179.1 667.1,176.8 671.5,175.5 675.0,174.0 678.0,173.8 680.3,172.3 682.9,170.7 686.6,168.6 688.8,167.1 691.6,164.0 695.1,162.5 696.1,160.6 696.9,156.0 698.3,154.2 700.3,150.5 703.4,150.4 705.8,147.8 709.9,146.7 711.5,144.9 714.0,146.6 715.8,149.3 718.6,151.6 721.3,151.2 724.8,148.3 727.2,146.4 729.8,145.0 733.6,144.1 735.6,140.4 738.9,138.7 741.1,138.3 744.2,136.4 747.7,136.3 751.7,133.9 753.4,135.1 757.2,133.4 760.6,133.6 762.3,130.5 763.8,127.9 766.2,126.1 769.4,122.7 771.8,120.2 773.5,120.3 777.1,119.8 780.3,118.4 780.1,115.4 780.9,111.7 783.4,109.0 784.2,104.8 784.7,102.2 784.4,99.2 786.0,95.0" fill="none" stroke="#000" stroke-width="1" stroke-linejoin="round" shape-rendering="crispEdges"/>
<polyline points="145.0,238.0 493.0,239.0 676.0,239.0 708.6,228.8 732.0,220.0 747.0,218.4 807.0,222.8" fill="none" stroke="#000" stroke-width="1" stroke-linejoin="round" shape-rendering="crispEdges"/>
<polyline points="6.0,415.0 80.0,415.0" fill="none" stroke="#000" stroke-width="1" stroke-linejoin="round" shape-rendering="crispEdges"/>
<polyline points="300.0,238.0 307.0,248.0 291.0,400.0 279.0,512.0 285.0,640.0 286.0,651.0" fill="none" stroke="#000" stroke-width="1" stroke-linejoin="round" shape-rendering="crispEdges"/>
<polyline points="493.1,238.9 493.7,241.4 494.6,245.6 494.8,247.2 495.0,250.5 495.0,254.7 497.0,255.9 497.2,260.0 496.8,262.3 497.8,265.6 498.4,269.0 497.8,272.2 500.0,275.5 499.7,276.7 498.9,280.0 501.2,283.4 500.5,287.6 500.9,290.0 501.5,292.0 502.3,296.7 501.9,298.5 502.8,301.1 503.4,305.8 504.2,308.2 505.0,310.5 504.9,314.0 505.4,316.6 506.2,319.6 505.4,324.0 507.5,326.3 506.8,329.0 507.0,332.8 507.2,334.9 508.2,338.0 509.1,342.4 509.8,344.8 509.4,347.7 509.1,351.3 510.2,353.6 510.2,356.9 511.8,359.9 513.0,363.5 512.4,366.3 514.4,369.3 514.4,371.5 514.8,375.4 515.3,378.3 516.3,381.6 516.8,384.0 517.3,388.7 517.9,389.9 517.7,393.9 518.5,396.1 519.2,399.9 521.6,402.9 521.1,405.8 521.7,408.8 522.7,412.6 523.2,414.6 523.7,418.6 523.3,420.2 524.8,424.1 525.4,426.8 526.4,429.6 527.5,433.5 527.9,436.2 529.7,439.2 529.5,442.2 532.1,445.2 533.7,446.8 534.3,449.5 535.3,454.0 535.7,455.8 536.7,458.4 536.9,461.8 538.5,466.9 537.4,470.2 537.9,473.4 537.3,477.2 541.4,478.6 544.7,481.6 542.7,483.3 540.0,487.2 537.9,489.3 533.7,491.4 533.2,493.7 532.9,497.4 533.3,500.7 531.8,503.8 531.6,506.4 530.9,509.6 530.9,513.5 531.0,516.3 530.8,519.7 531.0,523.5 531.0,526.2 530.8,530.6 531.0,533.4 529.3,536.9 531.0,538.5 530.1,542.4 531.1,546.2 530.4,548.6 530.3,551.7 531.7,556.6 530.7,559.5 532.3,561.6 531.7,565.4 532.1,569.2 529.8,570.9 531.1,574.6 530.0,578.0 531.8,581.2 532.2,582.4 534.1,585.3 535.1,589.9 536.0,592.3 536.8,594.3 538.8,598.7 540.7,600.1 541.7,604.0 541.7,606.8 543.3,609.9 543.5,614.2 545.7,617.0 546.4,620.0" fill="none" stroke="#000" stroke-width="1" stroke-linejoin="round" shape-rendering="crispEdges"/>
<polyline points="344.0,595.0 537.5,595.0" fill="none" stroke="#000" stroke-width="1" stroke-linejoin="round" shape-rendering="crispEdges"/>
<polyline points="343.9,595.3 343.6,597.3 341.5,600.7 341.3,604.6 341.4,607.2 343.3,609.4 344.6,611.1 346.8,614.1 348.7,616.0 350.9,617.9 353.5,619.4 356.7,620.7 355.7,625.5 357.2,626.8 358.8,631.5 357.6,633.4 358.3,636.1 360.0,639.0 360.9,641.9 360.6,646.5 362.0,649.0" fill="none" stroke="#000" stroke-width="1" stroke-linejoin="round" shape-rendering="crispEdges"/>
<polyline points="546.4,620.0 596.0,622.0 680.0,627.6 742.0,632.0 745.0,634.0 748.0,650.0 757.0,650.0 757.0,622.0 764.0,610.0 782.0,613.0 788.0,619.0 800.0,620.0" fill="none" stroke="#000" stroke-width="1" stroke-linejoin="round" shape-rendering="crispEdges"/>
<polyline points="675.2,239.4 674.2,242.5 671.3,243.7 670.0,247.0 667.0,249.7 665.1,252.4 662.4,253.9 661.8,256.7 660.5,262.0 661.3,265.0 663.4,268.0 665.0,269.9 667.2,271.3 669.5,273.0 673.6,275.3 676.0,277.4 677.5,280.2 680.0,280.7 682.2,283.7 684.6,282.6 689.2,283.4 691.1,283.3 694.4,284.0 696.5,285.5 698.7,288.5 699.1,291.3 701.6,294.4 702.7,297.3 704.1,301.4 705.8,303.9 706.8,306.8 708.1,309.1 709.0,312.4 710.9,316.8 710.4,318.2 712.8,322.0 712.5,325.2 715.5,327.6 716.9,329.9 720.7,331.3 722.0,333.1 725.3,335.6 727.1,337.4 729.3,339.2 733.8,341.7 735.0,344.4 737.7,345.0 739.1,347.2 741.4,349.8 744.7,352.3 745.5,355.4 748.8,357.2 750.5,359.7 752.2,362.3 755.1,364.8 756.4,367.1 758.2,368.3 761.5,370.8 763.2,372.5 765.6,375.2 764.9,378.8 765.9,380.6 766.1,383.1 766.6,387.2 767.1,389.3 770.6,392.1 773.5,394.8 776.2,396.2 779.5,398.0 781.5,400.3 785.0,402.6 787.4,405.0 789.8,408.2 791.7,411.1 794.8,412.6 796.1,414.6 798.8,416.9 802.4,419.9 802.9,421.8 806.0,423.6" fill="none" stroke="#000" stroke-width="1" stroke-linejoin="round" shape-rendering="crispEdges"/>
<circle cx="407" cy="407" r="159.5" fill="none" stroke="#cfcfcf" stroke-width="1" shape-rendering="crispEdges"/>
<circle cx="407" cy="407" r="279.5" fill="none" stroke="#cfcfcf" stroke-width="1" shape-rendering="crispEdges"/>
<circle cx="407" cy="407" r="399.5" fill="none" stroke="#cfcfcf" stroke-width="1" shape-rendering="crispEdges"/>
<circle cx="407" cy="407" r="519.5" fill="none" stroke="#cfcfcf" stroke-width="1" shape-rendering="crispEdges"/>
<circle cx="407" cy="407" r="39.5" fill="none" stroke="#ff0000" stroke-width="1.3" shape-rendering="crispEdges"/>
<text x="406.5" y="371.5" text-anchor="middle" font-family="Liberation Sans" font-size="10.5" letter-spacing="0.9" fill="#ffffa0" stroke="#5c504c" stroke-width="1.5" paint-order="stroke">31</text>
<text x="406.5" y="251.5" text-anchor="middle" font-family="Liberation Sans" font-size="10.5" letter-spacing="0.9" fill="#ffffa0" stroke="#5c504c" stroke-width="1.5" paint-order="stroke">125</text>
<text x="406.5" y="131.5" text-anchor="middle" font-family="Liberation Sans" font-size="10.5" letter-spacing="0.9" fill="#ffffa0" stroke="#5c504c" stroke-width="1.5" paint-order="stroke">219</text>
<text x="406.5" y="11.5" text-anchor="middle" font-family="Liberation Sans" font-size="10.5" letter-spacing="0.9" fill="#ffffa0" stroke="#5c504c" stroke-width="1.5" paint-order="stroke">313</text>
<circle cx="730" cy="132.4" r="4.3" fill="none" stroke="#ff5a14" stroke-width="1.1"/>
<path d="M727.4 132.4H732.6" stroke="#ff5a14" stroke-width="1.1"/>
<circle cx="757.4" cy="128.3" r="4.3" fill="none" stroke="#ffa500" stroke-width="1.1"/>
<path d="M754.8 128.3H760.0" stroke="#ffa500" stroke-width="1.1"/>
<circle cx="645.5" cy="162" r="4.3" fill="none" stroke="#ffa500" stroke-width="1.1"/>
<path d="M642.9 162.0H648.1" stroke="#ffa500" stroke-width="1.1"/>
<circle cx="691.4" cy="159.7" r="4.3" fill="none" stroke="#ffa500" stroke-width="1.1"/>
<path d="M688.8 159.7H694.0" stroke="#ffa500" stroke-width="1.1"/>
<circle cx="704.5" cy="179.5" r="4.3" fill="none" stroke="#ffa500" stroke-width="1.1"/>
<path d="M701.9 179.5H707.1" stroke="#ffa500" stroke-width="1.1"/>
<circle cx="697.4" cy="189" r="4.3" fill="none" stroke="#ffa500" stroke-width="1.1"/>
<path d="M694.8 189.0H700.0" stroke="#ffa500" stroke-width="1.1"/>
<circle cx="720.3" cy="200.3" r="4.3" fill="none" stroke="#ffa500" stroke-width="1.1"/>
<path d="M717.7 200.3H722.9" stroke="#ffa500" stroke-width="1.1"/>
<circle cx="802" cy="164.5" r="4.3" fill="none" stroke="#ffa500" stroke-width="1.1"/>
<path d="M799.4 164.5H804.6" stroke="#ffa500" stroke-width="1.1"/>
<circle cx="798.6" cy="173" r="4.3" fill="none" stroke="#ffa500" stroke-width="1.1"/>
<path d="M796.0 173.0H801.2" stroke="#ffa500" stroke-width="1.1"/>
<circle cx="756.6" cy="155.5" r="4.3" fill="none" stroke="#ffd000" stroke-width="1.1"/>
<path d="M754.0 155.5H759.2" stroke="#ffd000" stroke-width="1.1"/>
<circle cx="738.3" cy="165.5" r="4.3" fill="none" stroke="#ffd000" stroke-width="1.1"/>
<path d="M735.7 165.5H740.9" stroke="#ffd000" stroke-width="1.1"/>
<circle cx="680.3" cy="209.3" r="4.3" fill="none" stroke="#ffd000" stroke-width="1.1"/>
<path d="M677.7 209.3H682.9" stroke="#ffd000" stroke-width="1.1"/>
<circle cx="755.3" cy="224.5" r="4.3" fill="none" stroke="#ffd000" stroke-width="1.1"/>
<path d="M752.7 224.5H757.9" stroke="#ffd000" stroke-width="1.1"/>
<circle cx="683.4" cy="221.4" r="4.3" fill="none" stroke="#ffff00" stroke-width="1.1"/>
<path d="M680.8 221.4H686.0" stroke="#ffff00" stroke-width="1.1"/>
<circle cx="713.4" cy="230.2" r="4.3" fill="none" stroke="#ffff00" stroke-width="1.1"/>
<path d="M710.8 230.2H716.0" stroke="#ffff00" stroke-width="1.1"/>
<circle cx="672.4" cy="236.6" r="4.3" fill="none" stroke="#ffff00" stroke-width="1.1"/>
<path d="M669.8 236.6H675.0" stroke="#ffff00" stroke-width="1.1"/>
<circle cx="641" cy="254.5" r="4.3" fill="none" stroke="#ffa500" stroke-width="1.1"/>
<path d="M638.4 254.5H643.6" stroke="#ffa500" stroke-width="1.1"/>
<circle cx="764" cy="262" r="4.3" fill="none" stroke="#ffff00" stroke-width="1.1"/>
<path d="M761.4 262.0H766.6" stroke="#ffff00" stroke-width="1.1"/>
<circle cx="732" cy="301" r="4.3" fill="none" stroke="#ffa500" stroke-width="1.1"/>
<path d="M729.4 301.0H734.6" stroke="#ffa500" stroke-width="1.1"/>
<path d="M732.0 298.4V303.6" stroke="#ffa500" stroke-width="1.1"/>
<circle cx="768" cy="326" r="4.3" fill="none" stroke="#ffa500" stroke-width="1.1"/>
<path d="M765.4 326.0H770.6" stroke="#ffa500" stroke-width="1.1"/>
<path d="M768.0 323.4V328.6" stroke="#ffa500" stroke-width="1.1"/>
<circle cx="765.4" cy="337" r="4.3" fill="none" stroke="#ff5a14" stroke-width="1.1"/>
<path d="M762.8 337.0H768.0" stroke="#ff5a14" stroke-width="1.1"/>
<circle cx="618.5" cy="572.3" r="4.3" fill="none" stroke="#ffd000" stroke-width="1.1"/>
<path d="M615.9 572.3H621.1" stroke="#ffd000" stroke-width="1.1"/>
<circle cx="676.4" cy="592.5" r="4.3" fill="none" stroke="#ffd000" stroke-width="1.1"/>
<path d="M673.8 592.5H679.0" stroke="#ffd000" stroke-width="1.1"/>
<circle cx="642.2" cy="600.4" r="4.3" fill="none" stroke="#ffd000" stroke-width="1.1"/>
<path d="M639.6 600.4H644.8" stroke="#ffd000" stroke-width="1.1"/>
<path d="M665.1 606.6H670.3" stroke="#ffff00" stroke-width="1.1"/>
<path d="M667.7 603.1V610.1" stroke="#ffff00" stroke-width="1.1"/>
<path d="M664.2 606.6H671.2" stroke="#ffff00" stroke-width="1.1"/>
<circle cx="686.1" cy="602.2" r="4.3" fill="none" stroke="#ffa500" stroke-width="1.1"/>
<path d="M683.5 602.2H688.7" stroke="#ffa500" stroke-width="1.1"/>
<path d="M686.1 599.6V604.8" stroke="#ffa500" stroke-width="1.1"/>
<circle cx="616.3" cy="617.1" r="4.3" fill="none" stroke="#ff8c00" stroke-width="1.1"/>
<path d="M613.7 617.1H618.9" stroke="#ff8c00" stroke-width="1.1"/>
<circle cx="729.2" cy="617.1" r="4.3" fill="none" stroke="#ffa500" stroke-width="1.1"/>
<path d="M726.6 617.1H731.8" stroke="#ffa500" stroke-width="1.1"/>
<circle cx="659.4" cy="618.5" r="4.3" fill="none" stroke="#ffff00" stroke-width="1.1"/>
<path d="M656.8 618.5H662.0" stroke="#ffff00" stroke-width="1.1"/>
<circle cx="637.3" cy="627.3" r="4.3" fill="none" stroke="#ffd000" stroke-width="1.1"/>
<path d="M634.7 627.3H639.9" stroke="#ffd000" stroke-width="1.1"/>
<circle cx="647.5" cy="631.2" r="4.3" fill="none" stroke="#ffff00" stroke-width="1.1"/>
<path d="M644.9 631.2H650.1" stroke="#ffff00" stroke-width="1.1"/>
<circle cx="703.3" cy="636.1" r="4.3" fill="none" stroke="#ffa500" stroke-width="1.1"/>
<path d="M700.7 636.1H705.9" stroke="#ffa500" stroke-width="1.1"/>
<circle cx="658.3" cy="643.5" r="4.3" fill="none" stroke="#ffff00" stroke-width="1.1"/>
<path d="M655.7 643.5H660.9" stroke="#ffff00" stroke-width="1.1"/>
<circle cx="683.1" cy="644.9" r="4.3" fill="none" stroke="#ffff00" stroke-width="1.1"/>
<path d="M680.5 644.9H685.7" stroke="#ffff00" stroke-width="1.1"/>
<circle cx="684.4" cy="640.5" r="4.3" fill="none" stroke="#00ffff" stroke-width="1.1"/>
<path d="M681.8 640.5H687.0" stroke="#00ffff" stroke-width="1.1"/>
<circle cx="632.3" cy="679.5" r="4.3" fill="none" stroke="#ff5a14" stroke-width="1.1"/>
<path d="M629.7 679.5H634.9" stroke="#ff5a14" stroke-width="1.1"/>
<circle cx="696.4" cy="682.3" r="4.3" fill="none" stroke="#ffff00" stroke-width="1.1"/>
<path d="M693.8 682.3H699.0" stroke="#ffff00" stroke-width="1.1"/>
<path d="M678.6 700.5H683.8" stroke="#ffff00" stroke-width="1.1"/>
<path d="M681.2 697.0V704.0" stroke="#ffff00" stroke-width="1.1"/>
<path d="M677.7 700.5H684.7" stroke="#ffff00" stroke-width="1.1"/>
<path d="M688.1 702.3H693.3" stroke="#ffa500" stroke-width="1.1"/>
<circle cx="661.4" cy="712.5" r="4.3" fill="none" stroke="#ffa500" stroke-width="1.1"/>
<path d="M658.8 712.5H664.0" stroke="#ffa500" stroke-width="1.1"/>
<circle cx="676.3" cy="721.5" r="4.3" fill="none" stroke="#ffff00" stroke-width="1.1"/>
<path d="M673.7 721.5H678.9" stroke="#ffff00" stroke-width="1.1"/>
<path d="M712.7 728.4H717.9" stroke="#ffa500" stroke-width="1.1"/>
<path d="M715.3 724.9V731.9" stroke="#ffa500" stroke-width="1.1"/>
<path d="M711.8 728.4H718.8" stroke="#ffa500" stroke-width="1.1"/>
<circle cx="714.4" cy="722.4" r="4.3" fill="none" stroke="#00ffff" stroke-width="1.1"/>
<path d="M711.8 722.4H717.0" stroke="#00ffff" stroke-width="1.1"/>
<path d="M714.4 719.8V725.0" stroke="#00ffff" stroke-width="1.1"/>
<circle cx="755.3" cy="715.4" r="4.3" fill="none" stroke="#ffff00" stroke-width="1.1"/>
<path d="M752.7 715.4H757.9" stroke="#ffff00" stroke-width="1.1"/>
<circle cx="660.5" cy="753.2" r="4.3" fill="none" stroke="#ffff00" stroke-width="1.1"/>
<path d="M657.9 753.2H663.1" stroke="#ffff00" stroke-width="1.1"/>
<circle cx="708.5" cy="758.4" r="4.3" fill="none" stroke="#ffff00" stroke-width="1.1"/>
<path d="M705.9 758.4H711.1" stroke="#ffff00" stroke-width="1.1"/>
<circle cx="691.6" cy="776" r="4.3" fill="none" stroke="#ffff00" stroke-width="1.1"/>
<path d="M689.0 776.0H694.2" stroke="#ffff00" stroke-width="1.1"/>
<path d="M689.0 773.0H694.2" stroke="#ffff00" stroke-width="1.1"/>
<path d="M691.6 769.5V776.5" stroke="#ffff00" stroke-width="1.1"/>
<path d="M688.1 773.0H695.1" stroke="#ffff00" stroke-width="1.1"/>
<circle cx="677.6" cy="780.5" r="4.3" fill="none" stroke="#ff5a14" stroke-width="1.1"/>
<path d="M675.0 780.5H680.2" stroke="#ff5a14" stroke-width="1.1"/>
<path d="M769.9 746.3H775.1" stroke="#ffd000" stroke-width="1.1"/>
<path d="M772.5 742.8V749.8" stroke="#ffd000" stroke-width="1.1"/>
<path d="M769.0 746.3H776.0" stroke="#ffd000" stroke-width="1.1"/>
</g>
<rect x="9" y="759.5" width="243" height="43" fill="#000" stroke="#8c8c8c" stroke-width="2"/>
<rect x="685" y="792" width="121" height="14" fill="#000"/>
</svg>
<div class="t" style="top:763.34px;font-size:9.4px;color:#e8e8e8;letter-spacing:0.05px;left:13px;">Symbols</div>
<div class="t" style="top:763.17px;font-size:9.6px;color:#e8e8e8;letter-spacing:0.3px;left:52.5px;">-CG</div>
<div class="t" style="top:763.17px;font-size:9.6px;color:#e8e8e8;letter-spacing:0.3px;left:77.5px;">-IC</div>
<div class="t" style="top:763.17px;font-size:9.6px;color:#e8e8e8;letter-spacing:0.3px;left:98.5px;">+CG</div>
<div class="t" style="top:763.17px;font-size:9.6px;color:#e8e8e8;letter-spacing:0.3px;left:123px;">+IC</div>
<div class="t" style="top:763.60px;font-size:9.1px;color:#e8e8e8;left:153px;">Strike age color codes</div>
<div class="t" style="top:776.54px;font-size:9.4px;color:#e8e8e8;left:13px;">Recent</div>
<div class="t" style="top:789.14px;font-size:9.4px;color:#e8e8e8;letter-spacing:0.1px;left:13px;">Old</div>
<div class="t" style="top:776.54px;font-size:9.4px;color:#ffd400;letter-spacing:0.5px;left:153px;">15+</div>
<div class="t" style="top:776.54px;font-size:9.4px;color:#ffb000;letter-spacing:0.5px;left:188.5px;">30+</div>
<div class="t" style="top:776.54px;font-size:9.4px;color:#ff9a00;letter-spacing:0.5px;left:222.8px;">45+</div>
<div class="t" style="top:789.14px;font-size:9.4px;color:#ff8000;letter-spacing:0.5px;left:153px;">60+</div>
<div class="t" style="top:789.14px;font-size:9.4px;color:#ff6400;letter-spacing:0.5px;left:188.5px;">75+</div>
<div class="t" style="top:789.14px;font-size:9.4px;color:#ff4a00;letter-spacing:0.5px;left:222.8px;">90+</div>
<svg width="1138" height="812" style="position:absolute;left:0;top:0">
<circle cx="60.6" cy="780.5" r="4.3" fill="none" stroke="#00ffff" stroke-width="1.1"/><path d="M58 780.5H63.2" stroke="#00ffff" stroke-width="1.1"/>
<path d="M82.6 780.5H88.6" stroke="#00ffff" stroke-width="1.2"/>
<circle cx="110" cy="780.5" r="4.3" fill="none" stroke="#00ffff" stroke-width="1.1"/><path d="M107.4 780.5H112.6M110 777.9V783.1" stroke="#00ffff" stroke-width="1.1"/>
<path d="M131.5 780.5H138.5M135 777.0V784.0" stroke="#00ffff" stroke-width="1.2"/>
<circle cx="60.6" cy="793.5" r="4.3" fill="none" stroke="#ffff00" stroke-width="1.1"/><path d="M58 793.5H63.2" stroke="#ffff00" stroke-width="1.1"/>
<path d="M82.6 793.5H88.6" stroke="#ffff00" stroke-width="1.2"/>
<circle cx="110" cy="793.5" r="4.3" fill="none" stroke="#ffff00" stroke-width="1.1"/><path d="M107.4 793.5H112.6M110 790.9V796.1" stroke="#ffff00" stroke-width="1.1"/>
<path d="M131.5 793.5H138.5M135 790.0V797.0" stroke="#ffff00" stroke-width="1.2"/>
</svg>
<div class="t" style="top:794.04px;font-size:9.4px;color:#f0f0f0;left:688.8px;">©2005 Astrogenic Systems</div>
<div class="pn" style="left:812px;top:8px;width:320px;height:320px"></div>
<div class="pn" style="left:812px;top:333px;width:320px;height:115px"></div>
<div class="pn" style="left:812px;top:453px;width:320px;height:350px"></div>
<div class="btn" style="left:819px;top:16px;width:58px;height:18px;background:#5c0000"></div>
<div class="btn" style="left:883px;top:16px;width:58px;height:18px;background:#3a3a3a"></div>
<div class="btn" style="left:994px;top:16px;width:128px;height:18px;background:#3a3a3a"></div>
<div class="t" style="top:20.34px;font-size:12px;color:#d4d4d4;font-weight:bold;letter-spacing:0.8px;left:848px;transform:translateX(-50%);">STRIKE</div>
<div class="t" style="top:20.34px;font-size:12px;color:#d4d4d4;font-weight:bold;letter-spacing:0.8px;left:912px;transform:translateX(-50%);">NOISE</div>
<div class="t" style="top:18.60px;font-size:13px;color:#ffffff;font-weight:bold;letter-spacing:0.8px;left:998.8px;">Bng 130°</div>
<div class="t" style="top:18.60px;font-size:13px;color:#00ff00;font-weight:bold;letter-spacing:1.0px;left:1075.7px;">284mi</div>
<div class="btn" style="left:821px;top:64px;width:82px;height:16px;background:#585858"></div>
<div class="btn" style="left:931px;top:64px;width:82px;height:16px;background:#585858"></div>
<div class="btn" style="left:1041px;top:64px;width:82px;height:16px;background:#585858"></div>
<div class="t" style="top:65.40px;font-size:13px;color:#e4e4e4;left:862px;transform:translateX(-50%);">Strikes/min</div>
<div class="t" style="top:65.40px;font-size:13px;color:#e4e4e4;left:972px;transform:translateX(-50%);">Close/min</div>
<div class="t" style="top:65.40px;font-size:13px;color:#e4e4e4;left:1082px;transform:translateX(-50%);">Noises/min</div>
<div class="t" style="top:87.75px;font-size:29px;color:#ffffff;font-weight:bold;right:235.5px;">2</div>
<div class="t" style="top:87.75px;font-size:29px;color:#ffffff;font-weight:bold;right:125.5px;">0</div>
<div class="t" style="top:87.75px;font-size:29px;color:#c0c0c0;font-weight:bold;right:15.5px;">0</div>
<div class="t" style="top:131.60px;font-size:13px;color:#f0f0f0;letter-spacing:0.4px;right:235.5px;">Total Strikes</div>
<div class="t" style="top:131.60px;font-size:13px;color:#f0f0f0;letter-spacing:0.4px;right:125.5px;">Total Close</div>
<div class="t" style="top:131.60px;font-size:13px;color:#f0f0f0;letter-spacing:0.4px;right:15.5px;">Total Noises</div>
<div class="t" style="top:149.82px;font-size:12.5px;color:#f0f0f0;letter-spacing:0.9px;right:235.5px;">7055</div>
<div class="t" style="top:149.82px;font-size:12.5px;color:#f0f0f0;letter-spacing:0.9px;right:125.5px;">2582</div>
<div class="t" style="top:149.82px;font-size:12.5px;color:#f0f0f0;letter-spacing:0.9px;right:15.5px;">1258</div>
<div class="t" style="top:204.00px;font-size:13px;color:#c8c8c8;letter-spacing:0.6px;left:821px;">Lightning type distribution</div>
<div style="position:absolute;left:821px;top:216px;width:303px;height:1px;background:#9a9a9a"></div>
<div class="t" style="top:225.70px;font-size:13px;color:#f4f4f4;font-weight:bold;left:821px;">Cloud-ground</div>
<div class="t" style="top:225.70px;font-size:13px;color:#e8e8e8;font-weight:bold;left:912.5px;">+</div>
<div class="bar" style="left:925px;top:227px;width:51px;height:11px"><i style="width:13px;background:#ff0000"></i></div>
<div class="t" style="top:225.70px;font-size:13px;color:#ffffff;font-weight:bold;letter-spacing:0.9px;left:979.5px;">27%</div>
<div style="position:absolute;left:1016px;top:231.7px;width:7px;height:2px;background:#d0d0d0"></div>
<div class="bar" style="left:1028px;top:227px;width:51px;height:11px"><i style="width:29px;background:#99ccff"></i></div>
<div class="t" style="top:225.70px;font-size:13px;color:#ffffff;font-weight:bold;letter-spacing:0.9px;left:1082.3px;">57%</div>
<div class="t" style="top:249.70px;font-size:13px;color:#c4c4c4;font-weight:bold;left:821px;">Count</div>
<div class="t" style="top:249.70px;font-size:13px;color:#ffffff;font-weight:bold;letter-spacing:0.4px;left:925.7px;">1903</div>
<div class="t" style="top:249.70px;font-size:13px;color:#ffffff;font-weight:bold;letter-spacing:0.4px;left:1028.5px;">3991</div>
<div class="t" style="top:279.70px;font-size:13px;color:#f4f4f4;font-weight:bold;left:821px;">Intracloud</div>
<div class="t" style="top:279.70px;font-size:13px;color:#e8e8e8;font-weight:bold;left:912.5px;">+</div>
<div class="bar" style="left:925px;top:281px;width:51px;height:11px"><i style="width:4px;background:#ff66b4"></i></div>
<div class="t" style="top:279.70px;font-size:13px;color:#ffffff;font-weight:bold;letter-spacing:0.9px;left:979.5px;">7%</div>
<div style="position:absolute;left:1016px;top:285.7px;width:7px;height:2px;background:#d0d0d0"></div>
<div class="bar" style="left:1028px;top:281px;width:51px;height:11px"><i style="width:5px;background:#00ff00"></i></div>
<div class="t" style="top:279.70px;font-size:13px;color:#ffffff;font-weight:bold;letter-spacing:0.9px;left:1082.3px;">9%</div>
<div class="t" style="top:303.70px;font-size:13px;color:#c4c4c4;font-weight:bold;left:821px;">Count</div>
<div class="t" style="top:303.70px;font-size:13px;color:#ffffff;font-weight:bold;letter-spacing:0.4px;left:925.7px;">525</div>
<div class="t" style="top:303.70px;font-size:13px;color:#ffffff;font-weight:bold;letter-spacing:0.4px;left:1028.5px;">636</div>
<div class="t" style="top:339.80px;font-size:15px;color:#00ff00;font-weight:bold;left:821.7px;transform:scaleX(1.345);transform-origin:0 0;">2/27/2026 7:45:19 PM</div>
<div style="position:absolute;left:821px;top:358px;width:302px;height:1px;background:#9a9a9a"></div>
<div class="t" style="top:377.00px;font-size:13px;color:#f4f4f4;letter-spacing:0.45px;left:821px;">Squelch</div>
<div class="t" style="top:377.00px;font-size:13px;color:#f4f4f4;letter-spacing:0.6px;left:909.7px;">0</div>
<div class="t" style="top:377.00px;font-size:13px;color:#f4f4f4;letter-spacing:0.45px;left:981px;">Upload</div>
<div class="t" style="top:377.00px;font-size:13px;color:#c8c8c8;letter-spacing:0.45px;left:1060.8px;">Disabled</div>
<div class="t" style="top:396.65px;font-size:13px;color:#f4f4f4;letter-spacing:0.45px;left:821px;">Persistence</div>
<div class="t" style="top:396.65px;font-size:13px;color:#f4f4f4;letter-spacing:0.6px;left:909.7px;">90 min</div>
<div class="t" style="top:396.65px;font-size:13px;color:#f4f4f4;letter-spacing:0.45px;left:981px;">Capture</div>
<div class="t" style="top:396.65px;font-size:13px;color:#00e000;letter-spacing:0.45px;left:1060.8px;">Active</div>
<div class="t" style="top:416.30px;font-size:13px;color:#f4f4f4;letter-spacing:0.45px;left:821px;">Range</div>
<div class="t" style="top:416.30px;font-size:13px;color:#f4f4f4;letter-spacing:0.6px;left:909.7px;">313 mi</div>
<div class="t" style="top:416.30px;font-size:13px;color:#f4f4f4;letter-spacing:0.45px;left:981px;">Receiver</div>
<div class="t" style="top:416.30px;font-size:13px;color:#00e000;letter-spacing:0.45px;left:1060.8px;">Enabled</div>
<div class="t" style="top:463.80px;font-size:13px;color:#c8c8c8;letter-spacing:0.45px;left:821.5px;">Uptime</div>
<div class="t" style="top:463.80px;font-size:13px;color:#f4f4f4;letter-spacing:1.2px;left:910.1px;">1111:30</div>
<div class="t" style="top:463.80px;font-size:13px;color:#c8c8c8;letter-spacing:0.45px;left:981px;">Peak time</div>
<div class="t" style="top:463.80px;font-size:13px;color:#c8c8c8;letter-spacing:0.45px;left:1060.8px;">Plot</div>
<div class="t" style="top:486.60px;font-size:13px;color:#c8c8c8;letter-spacing:0.45px;left:821.5px;">Peak rate</div>
<div class="t" style="top:486.60px;font-size:13px;color:#f4f4f4;letter-spacing:0.6px;left:910.1px;">176/min</div>
<div class="t" style="top:486.60px;font-size:13px;color:#f4f4f4;letter-spacing:0.6px;left:981.5px;">12:36 AM</div>
<div class="t" style="top:486.60px;font-size:13px;color:#f4f4f4;letter-spacing:0.45px;left:1060.8px;">Strike</div>
<div class="t" style="top:516.30px;font-size:13px;color:#e0e0e0;letter-spacing:0.55px;left:822.3px;">Trend graph</div>
<div class="t" style="top:516.30px;font-size:13px;color:#f4f4f4;letter-spacing:0.5px;left:908.5px;">60 min</div>
<svg width="1138" height="812" style="position:absolute;left:0;top:0">
<path d="M822.6 777.4H1088.3M1088.3 777.4V542M822.6 777.4V769.5" stroke="#c8c8c8" stroke-width="1.3" fill="none"/>
<path d="M1084.3 777.4H1088.3" stroke="#c8c8c8" stroke-width="1.2"/>
<path d="M1084.3 738.2H1088.3" stroke="#c8c8c8" stroke-width="1.2"/>
<path d="M1084.3 699.0H1091.3" stroke="#c8c8c8" stroke-width="1.2"/>
<path d="M1084.3 659.8H1088.3" stroke="#c8c8c8" stroke-width="1.2"/>
<path d="M1084.3 620.6H1091.3" stroke="#c8c8c8" stroke-width="1.2"/>
<path d="M1084.3 581.4H1088.3" stroke="#c8c8c8" stroke-width="1.2"/>
<path d="M1084.3 542.2H1091.3" stroke="#c8c8c8" stroke-width="1.2"/>
<path d="M866.9 777.4V779.4" stroke="#c8c8c8" stroke-width="1.2"/>
<path d="M911.2 777.4V779.4" stroke="#c8c8c8" stroke-width="1.2"/>
<path d="M955.5 777.4V779.4" stroke="#c8c8c8" stroke-width="1.2"/>
<path d="M999.7 777.4V779.4" stroke="#c8c8c8" stroke-width="1.2"/>
<path d="M1044.0 777.4V779.4" stroke="#c8c8c8" stroke-width="1.2"/>
<polyline points="834.2,777.2 836.2,762.9 837.4,761.4 838.6,761.4 839.8,766.9 841.0,769.3 842.9,769.3 843.7,765.3 844.5,761.4 845.7,768.1 847.3,769.7 849.3,769.7 850.4,776.4 851.6,777.2 852.4,773.2 853.6,769.7 856.0,769.7 858.0,776.4 858.8,777.2 859.9,774.0 861.5,765.3 862.7,761.4 864.3,761.4 865.9,770.1 867.1,777.2 871.0,777.2 872.2,771.6 874.6,768.9 875.4,758.2 876.5,753.4 877.7,758.2 878.5,761.4 879.7,761.4 880.9,776.4 882.1,777.2 882.9,773.2 884.1,766.1 885.6,761.4 886.8,763.7 888.8,769.3 892.0,769.7 893.9,776.4 894.7,777.2 902.3,777.2 903.0,773.2 903.8,769.7 905.0,769.7 906.2,769.7 906.6,769.7 907.8,776.4 908.6,776.4 909.3,777.2 910.0,777.2 914.9,777.2 915.7,773.2 916.5,765.3 917.7,761.4 920.4,761.4 921.2,766.1 922.0,769.7 924.0,769.7 926.0,776.4 926.7,777.2 935.8,777.2 937.0,773.2 938.2,769.7 945.3,769.7 947.3,774.8 948.1,777.2 948.5,769.7 950.1,769.7 951.3,761.4 952.5,764.5 953.6,767.7 954.4,761.4 957.6,761.4 958.0,755.8 958.8,744.7 959.6,738.0 960.4,752.7 962.3,753.4 963.5,777.2 964.7,769.7 968.3,769.7 969.9,776.4 970.6,777.2 971.4,773.2 972.2,769.7 975.4,769.7 977.0,776.4 977.8,777.2 988.8,777.2 990.0,761.6 990.4,761.4 993.2,761.4 995.1,766.9 996.0,769.4 997.4,757.7 998.8,753.7 999.7,761.6 1001.1,753.7 1002.0,761.6 1003.8,761.6 1004.8,769.4 1008.0,777.2 1009.4,777.2 1011.2,769.4 1013.1,761.6 1015.8,761.6 1018.6,769.4 1021.4,777.2 1022.3,769.4 1024.6,769.4 1025.5,761.6 1026.9,769.4 1033.4,769.4 1035.2,777.2 1035.7,761.6 1038.0,753.7 1039.4,738.0 1040.3,753.7 1041.7,761.6 1043.1,761.6 1044.0,777.2 1045.4,761.6 1048.1,761.6 1050.0,769.4 1051.4,777.2 1052.3,761.6 1055.5,761.6 1057.4,777.2 1061.0,777.2 1062.0,761.6 1063.8,753.7 1065.2,761.6 1066.6,777.2 1068.4,777.2 1070.3,745.9 1072.1,738.0 1073.5,745.9 1074.9,761.6 1076.3,761.6 1078.6,769.4 1080.9,777.2 1082.3,777.2 1086.0,761.6 1087.8,753.7 1088.5,777.2" fill="none" stroke="#ffffff" stroke-width="1.2" stroke-linejoin="miter"/>
<polyline points="835.5,777.0 837.0,769.7 845.5,769.7 847.0,777.0" fill="none" stroke="#80c0ff" stroke-width="1.2"/>
<polyline points="836.6,769.7 839.0,777.0" fill="none" stroke="#ff0000" stroke-width="1.2"/>
<polyline points="843.0,769.7 843.5,777.0" fill="none" stroke="#ff0000" stroke-width="1.2"/>
<polyline points="920.0,767.0 921.5,777.0" fill="none" stroke="#80c0ff" stroke-width="1.2"/>
<polyline points="920.3,773.0 920.3,777.0" fill="none" stroke="#ff0000" stroke-width="1.2"/>
<polyline points="941.5,769.7 941.5,777.0" fill="none" stroke="#00ff00" stroke-width="1.2"/>
<polyline points="942.5,769.7 942.5,777.0" fill="none" stroke="#ff66b4" stroke-width="1.2"/>
<polyline points="953.5,777.0 955.0,769.7 961.0,769.7 961.5,777.0" fill="none" stroke="#ff66b4" stroke-width="1.2"/>
<polyline points="957.5,769.7 958.5,758.0 959.6,745.0" fill="none" stroke="#80c0ff" stroke-width="1.2"/>
<polyline points="993.0,777.0 994.0,769.7 998.0,769.7 999.5,777.0" fill="none" stroke="#00ff00" stroke-width="1.2"/>
<polyline points="1000.5,769.7 1001.5,777.0" fill="none" stroke="#ff0000" stroke-width="1.2"/>
<polyline points="1003.5,777.0 1004.3,769.7" fill="none" stroke="#ff66b4" stroke-width="1.2"/>
<polyline points="990.0,769.7 994.0,769.7" fill="none" stroke="#80c0ff" stroke-width="1.2"/>
<polyline points="1000.0,767.0 1001.0,761.4" fill="none" stroke="#80c0ff" stroke-width="1.2"/>
<polyline points="1035.0,777.0 1036.0,769.7 1039.5,769.7 1040.5,777.0" fill="none" stroke="#00ff00" stroke-width="1.2"/>
<polyline points="1038.5,769.7 1039.5,751.0" fill="none" stroke="#80c0ff" stroke-width="1.2"/>
<polyline points="1052.0,777.0 1053.0,769.7 1056.0,769.7 1057.0,777.0" fill="none" stroke="#ff66b4" stroke-width="1.2"/>
<polyline points="1050.0,777.0 1048.0,769.7" fill="none" stroke="#80c0ff" stroke-width="1.2"/>
<polyline points="1062.0,777.0 1063.0,769.7 1066.0,769.7 1067.0,777.0" fill="none" stroke="#ff0000" stroke-width="1.2"/>
<polyline points="1064.0,769.7 1065.0,761.4 1066.0,769.7" fill="none" stroke="#80c0ff" stroke-width="1.2"/>
<polyline points="1069.0,777.0 1072.0,761.4 1075.0,769.7 1077.0,777.0" fill="none" stroke="#ff66b4" stroke-width="1.2"/>
<polyline points="1071.0,761.4 1072.0,753.0" fill="none" stroke="#80c0ff" stroke-width="1.2"/>
<polyline points="1076.0,769.7 1077.0,777.0" fill="none" stroke="#80c0ff" stroke-width="1.2"/>
<polyline points="1085.0,777.0 1088.0,769.7" fill="none" stroke="#ff0000" stroke-width="1.2"/>
<polyline points="1086.0,769.7 1087.5,761.4" fill="none" stroke="#80c0ff" stroke-width="1.2"/>
</svg>
<div class="t" style="top:536.14px;font-size:12px;color:#d8d8d8;left:1092px;">30</div>
<div class="t" style="top:614.44px;font-size:12px;color:#d8d8d8;left:1092px;">20</div>
<div class="t" style="top:693.14px;font-size:12px;color:#d8d8d8;left:1092px;">10</div>
<div class="t" style="top:782.84px;font-size:12px;color:#d8d8d8;left:820.8px;">60</div>
<div class="t" style="top:782.84px;font-size:12px;color:#d8d8d8;left:864px;">50</div>
<div class="t" style="top:782.84px;font-size:12px;color:#d8d8d8;left:909.4px;">40</div>
<div class="t" style="top:782.84px;font-size:12px;color:#d8d8d8;left:952.8px;">30</div>
<div class="t" style="top:782.84px;font-size:12px;color:#d8d8d8;left:998px;">20</div>
<div class="t" style="top:782.84px;font-size:12px;color:#d8d8d8;left:1043px;">10</div>
<div class="t" style="top:782.84px;font-size:12px;color:#d8d8d8;left:1087.3px;">0</div>
<div class="t" style="top:782.84px;font-size:12px;color:#d8d8d8;left:1100.5px;">min</div>
</body></html>
